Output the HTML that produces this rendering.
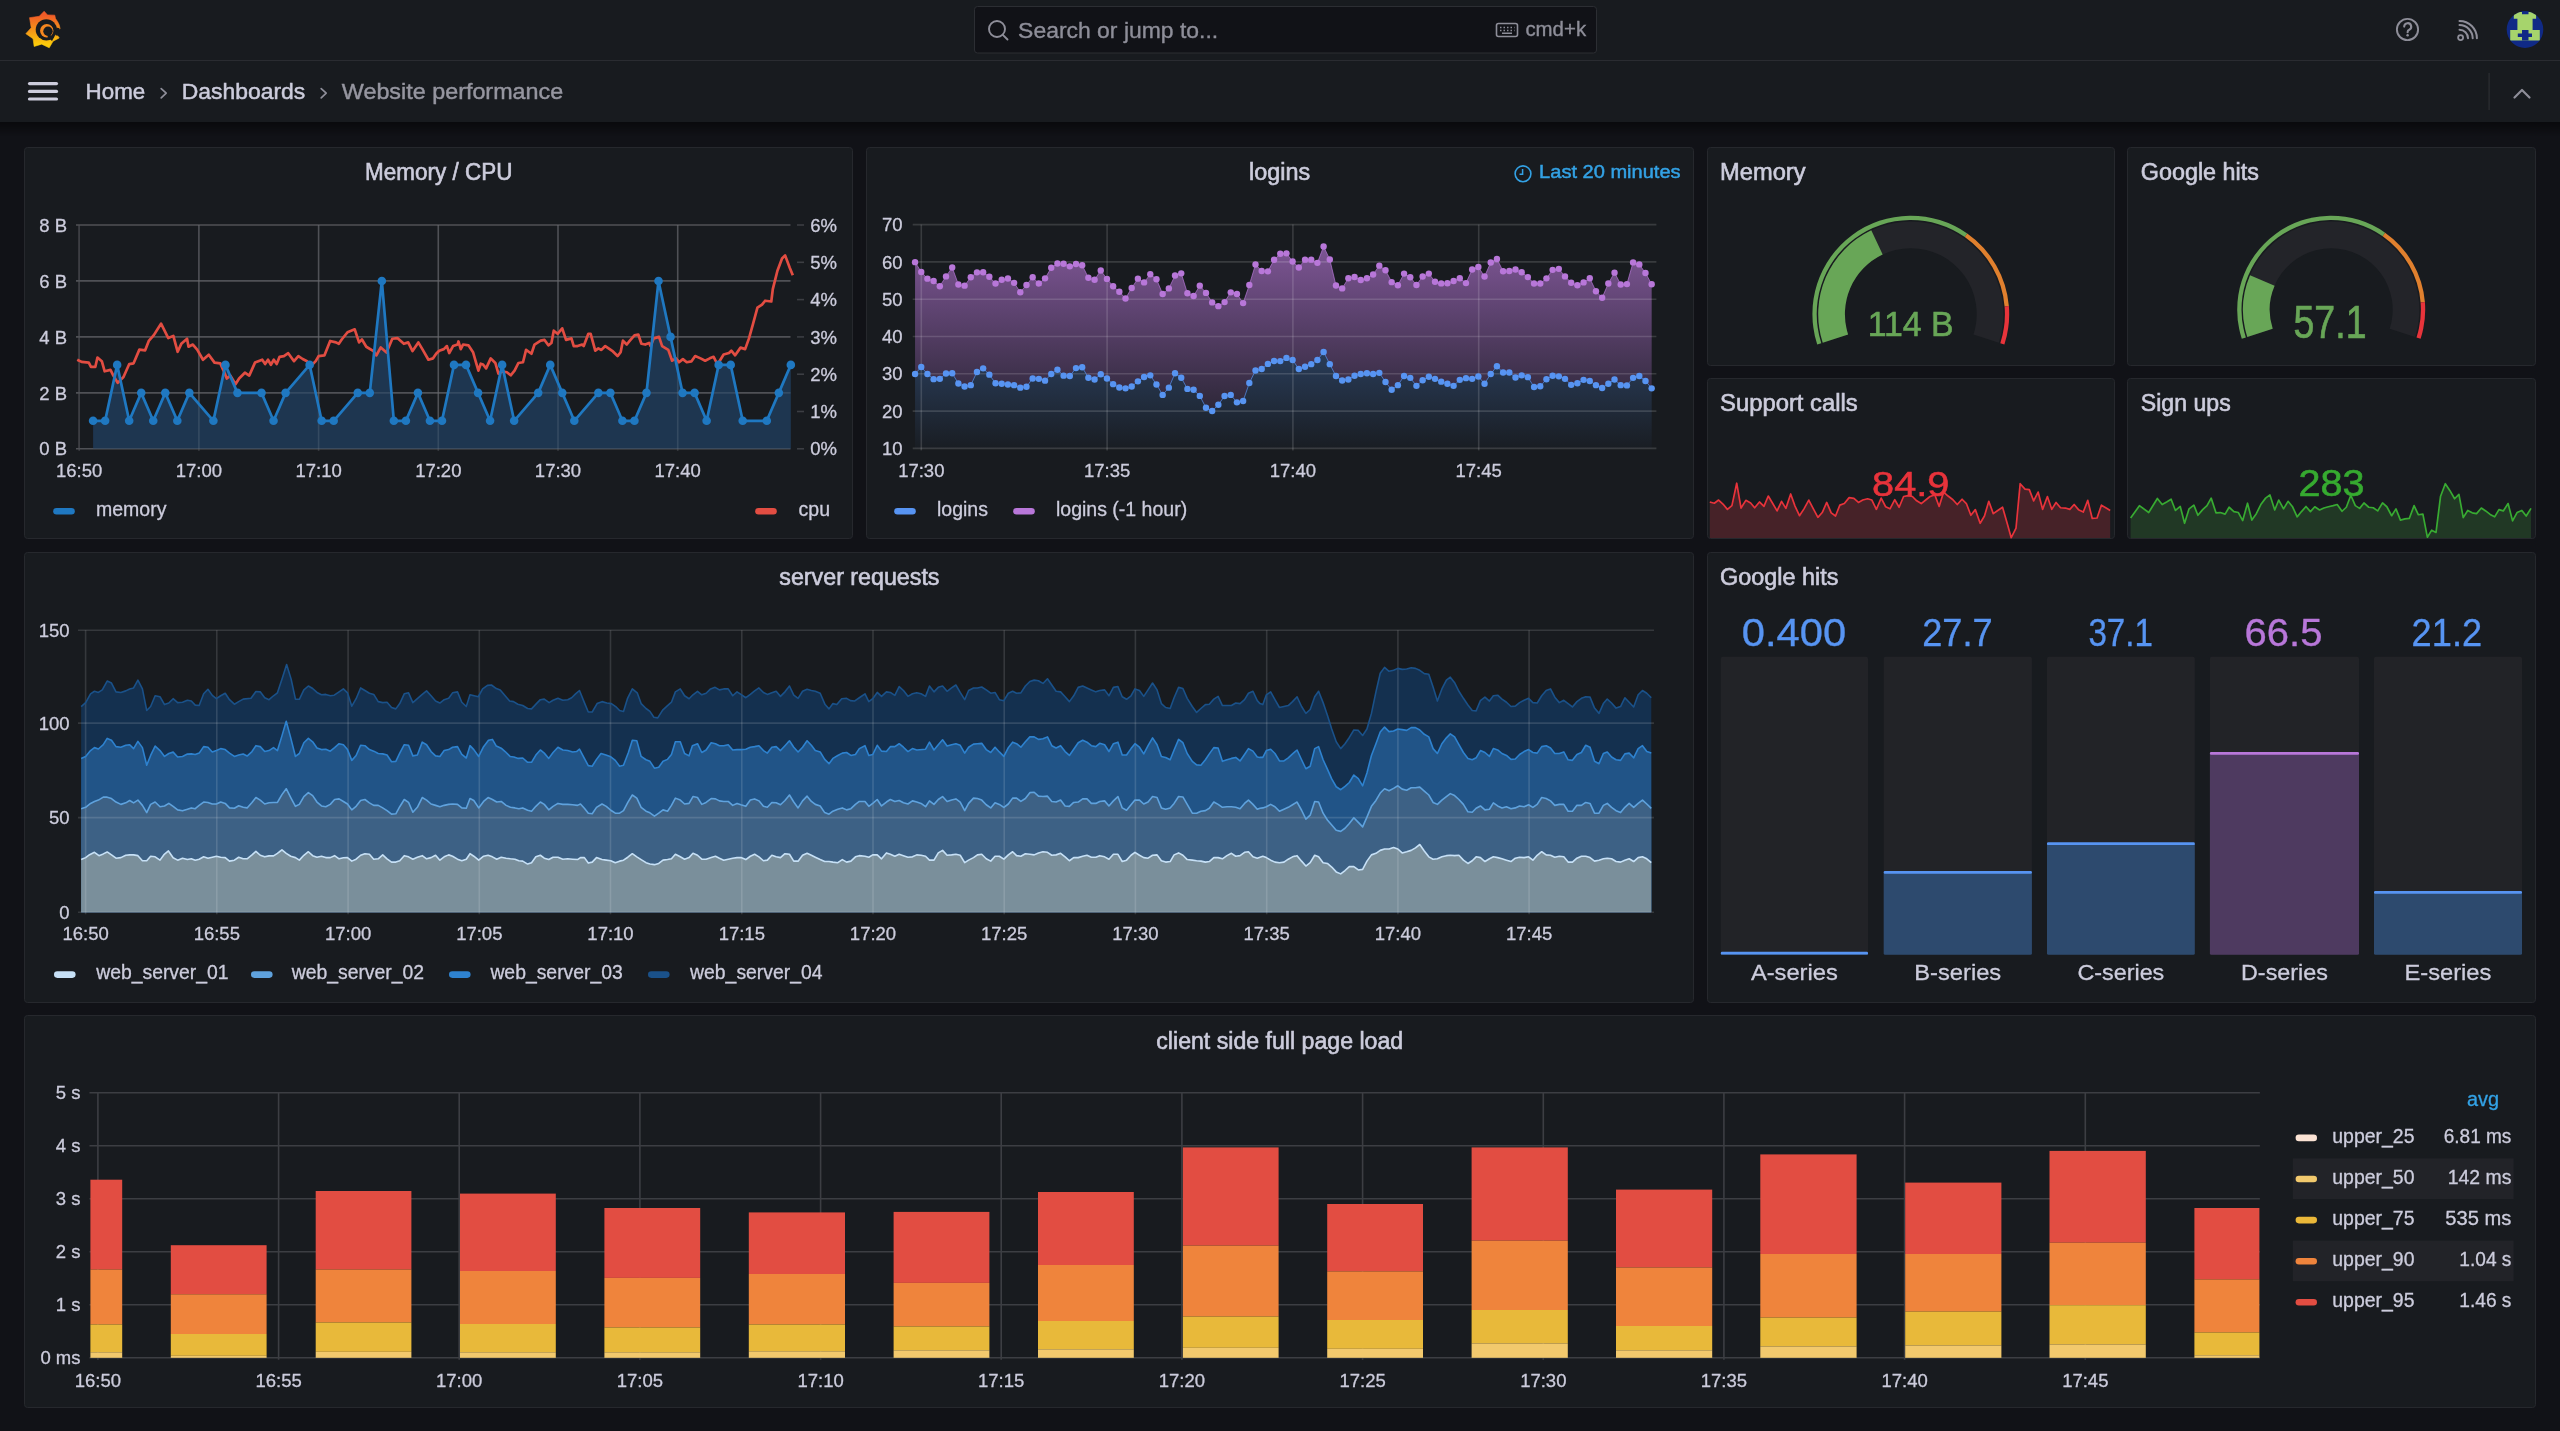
<!DOCTYPE html><html><head><meta charset="utf-8"><style>
*{box-sizing:border-box;margin:0;padding:0}
html,body{width:2560px;height:1431px;overflow:hidden;background:#111217;font-family:"Liberation Sans",sans-serif;color:#ccccdc}
.abs{position:absolute}
.panel{position:absolute;background:#181b1f;border:1px solid #25272c;border-radius:3px}
.t{position:absolute;white-space:nowrap;line-height:1}
svg{position:absolute;left:0;top:0;overflow:visible}
</style></head><body>
<svg width="2560" height="1431" viewBox="0 0 2560 1431" style="font-family:'Liberation Sans',sans-serif;will-change:transform">
<defs><linearGradient id="logo" x1="0" y1="0" x2="0" y2="1"><stop offset="0.1" stop-color="#f05a28"/><stop offset="0.9" stop-color="#fbca0a"/></linearGradient><linearGradient id="shad" x1="0" y1="0" x2="0" y2="1"><stop offset="0" stop-color="#000" stop-opacity="0.45"/><stop offset="1" stop-color="#000" stop-opacity="0"/></linearGradient></defs>
<rect x="0" y="0" width="2560" height="122" fill="#181b1f"/>
<rect x="0" y="60" width="2560" height="1" fill="#2a2c31"/>
<rect x="0" y="122" width="2560" height="14" fill="url(#shad)"/>
<polygon points="44.14,11.23 47.52,14.92 54.75,15.13 55.52,18.61 57.67,21.68 59.27,25.07 60.13,28.76 56.44,29.22 55.83,32.29 57.06,34.75 59.21,37.98 53.06,41.21 49.21,47.82 41.68,44.13 34.15,46.44 33.07,38.75 25.84,33.68 31.23,27.68 29.53,17.69 39.22,16.30" fill="url(#logo)" stroke="url(#logo)" stroke-width="0.6" stroke-linejoin="round"/>
<circle cx="46.3" cy="29.8" r="10.6" fill="#181b1f"/>
<path d="M56.2 27.5 L59.5 28.2 L57.5 36 L55.5 35 Z" fill="#181b1f"/>
<circle cx="46.75" cy="30.75" r="6.7" fill="#f5861f"/>
<circle cx="48" cy="31.3" r="4.7" fill="#181b1f"/>
<path d="M48.5 34.5 L54.5 36.5 L52 41 L47.5 37 Z" fill="#181b1f"/>
<rect x="974.5" y="6.5" width="622" height="46.5" rx="3" fill="#111217" stroke="#2c2e33" stroke-width="1"/>
<circle cx="997" cy="29" r="8" fill="none" stroke="#8e8e99" stroke-width="1.9"/>
<line x1="1002.8" y1="34.8" x2="1007.5" y2="39.5" stroke="#8e8e99" stroke-width="1.9" stroke-linecap="round"/>
<text x="1018.1" y="37.5" font-size="22" fill="#8e8e99" stroke="#8e8e99" stroke-width="0.35" textLength="200.1" lengthAdjust="spacingAndGlyphs">Search or jump to...</text>
<rect x="1496.5" y="23.5" width="21" height="13" rx="2" fill="none" stroke="#8e8e99" stroke-width="1.6"/>
<path d="M1500 27.5h1.5M1503.5 27.5h1.5M1507 27.5h1.5M1510.5 27.5h1.5M1514 27.5h0.5M1500 30.5h1.5M1503.5 30.5h1.5M1507 30.5h1.5M1510.5 30.5h1.5M1514 30.5h0.5M1502 33.2h10" stroke="#8e8e99" stroke-width="1.4"/>
<text x="1525.4" y="35.8" font-size="19.5" fill="#8e8e99" stroke="#8e8e99" stroke-width="0.35" textLength="60.7" lengthAdjust="spacingAndGlyphs">cmd+k</text>
<circle cx="2407.5" cy="29.5" r="10.6" fill="none" stroke="#8e8e99" stroke-width="1.9"/>
<path d="M2404.2 26.6 a3.5 3.5 0 1 1 5 3.2 q-1.6 0.7 -1.6 2.5" fill="none" stroke="#8e8e99" stroke-width="2.1" stroke-linecap="round"/>
<circle cx="2407.6" cy="35.3" r="1.25" fill="#8e8e99"/>
<circle cx="2460.6" cy="37.6" r="2.5" fill="none" stroke="#8e8e99" stroke-width="1.8"/>
<path d="M2459.5 29.8 a8.5 8.5 0 0 1 8.5 8.5 M2459.5 25.1 a13.2 13.2 0 0 1 13.2 13.2 M2459.5 20.9 a17.4 17.4 0 0 1 17.4 17.4" fill="none" stroke="#8e8e99" stroke-width="2" stroke-linecap="round"/>
<clipPath id="av"><circle cx="2525" cy="29.6" r="18.3"/></clipPath>
<g clip-path="url(#av)"><rect x="2505" y="10" width="40" height="40" fill="#102a86"/><path fill="#a6d46c" d="M2513.8 12h22.3v6.8h-3.5V30h7.2v10.6h-29.6V30h7.2V18.8h-3.6z"/><path fill="#102a86" d="M2522 10h6.5v4.2h-6.5zM2517.8 33.5h14.2V37h-14.2zM2522 30h6.5v10.6h-6.5z"/></g>
<line x1="29.5" y1="83.6" x2="56.5" y2="83.6" stroke="#ccccdc" stroke-width="3.2" stroke-linecap="round"/>
<line x1="29.5" y1="91.4" x2="56.5" y2="91.4" stroke="#ccccdc" stroke-width="3.2" stroke-linecap="round"/>
<line x1="29.5" y1="99.0" x2="56.5" y2="99.0" stroke="#ccccdc" stroke-width="3.2" stroke-linecap="round"/>
<text x="85.6" y="98.9" font-size="22.8" fill="#ccccdc" stroke="#ccccdc" stroke-width="0.5" textLength="59.6" lengthAdjust="spacingAndGlyphs">Home</text>
<path d="M161.2 88.6 L166.2 93.2 L161.2 97.8" fill="none" stroke="#8e8e99" stroke-width="1.7" stroke-linecap="round" stroke-linejoin="round"/>
<text x="181.8" y="98.9" font-size="22.8" fill="#ccccdc" stroke="#ccccdc" stroke-width="0.5" textLength="123.4" lengthAdjust="spacingAndGlyphs">Dashboards</text>
<path d="M321.2 88.6 L326.2 93.2 L321.2 97.8" fill="none" stroke="#8e8e99" stroke-width="1.7" stroke-linecap="round" stroke-linejoin="round"/>
<text x="341.8" y="98.9" font-size="22.8" fill="#9696a0" stroke="#9696a0" stroke-width="0.45" textLength="221.4" lengthAdjust="spacingAndGlyphs">Website performance</text>
<rect x="2488.5" y="73" width="1.2" height="37" fill="#2c2e33"/>
<path d="M2514.5 97.5 L2522 90 L2529.5 97.5" fill="none" stroke="#8e8e99" stroke-width="2.2" stroke-linecap="round" stroke-linejoin="round"/><rect x="24.5" y="147.5" width="828" height="391" rx="3" fill="#181b1f" stroke="#26282d" stroke-width="1"/>
<rect x="866.5" y="147.5" width="827" height="391" rx="3" fill="#181b1f" stroke="#26282d" stroke-width="1"/>
<rect x="1707.5" y="147.5" width="407" height="218" rx="3" fill="#181b1f" stroke="#26282d" stroke-width="1"/>
<rect x="2127.5" y="147.5" width="408" height="218" rx="3" fill="#181b1f" stroke="#26282d" stroke-width="1"/>
<rect x="1707.5" y="378.5" width="407" height="160" rx="3" fill="#181b1f" stroke="#26282d" stroke-width="1"/>
<rect x="2127.5" y="378.5" width="408" height="160" rx="3" fill="#181b1f" stroke="#26282d" stroke-width="1"/>
<rect x="24.5" y="552.5" width="1669" height="450" rx="3" fill="#181b1f" stroke="#26282d" stroke-width="1"/>
<rect x="1707.5" y="552.5" width="828" height="450" rx="3" fill="#181b1f" stroke="#26282d" stroke-width="1"/>
<rect x="24.5" y="1015.5" width="2511" height="392" rx="3" fill="#181b1f" stroke="#26282d" stroke-width="1"/><line x1="76" y1="448.8" x2="790.5" y2="448.8" stroke="#3c3e43" stroke-width="1.6"/>
<line x1="76" y1="392.9" x2="790.5" y2="392.9" stroke="#3c3e43" stroke-width="1.6"/>
<line x1="76" y1="336.9" x2="790.5" y2="336.9" stroke="#3c3e43" stroke-width="1.6"/>
<line x1="76" y1="280.9" x2="790.5" y2="280.9" stroke="#3c3e43" stroke-width="1.6"/>
<line x1="76" y1="225.0" x2="790.5" y2="225.0" stroke="#3c3e43" stroke-width="1.6"/>
<line x1="79.2" y1="225.0" x2="79.2" y2="450.8" stroke="#3c3e43" stroke-width="1.6"/>
<line x1="198.9" y1="225.0" x2="198.9" y2="450.8" stroke="#3c3e43" stroke-width="1.6"/>
<line x1="318.6" y1="225.0" x2="318.6" y2="450.8" stroke="#3c3e43" stroke-width="1.6"/>
<line x1="438.3" y1="225.0" x2="438.3" y2="450.8" stroke="#3c3e43" stroke-width="1.6"/>
<line x1="558.0" y1="225.0" x2="558.0" y2="450.8" stroke="#3c3e43" stroke-width="1.6"/>
<line x1="677.7" y1="225.0" x2="677.7" y2="450.8" stroke="#3c3e43" stroke-width="1.6"/>
<line x1="797" y1="448.8" x2="804" y2="448.8" stroke="#3c3e43" stroke-width="1.6"/>
<text x="837.0" y="455.4" font-size="18.5" fill="#ccccdc" text-anchor="end" font-weight="normal" stroke="#ccccdc" stroke-width="0.3" >0%</text>
<line x1="797" y1="411.5" x2="804" y2="411.5" stroke="#3c3e43" stroke-width="1.6"/>
<text x="837.0" y="418.1" font-size="18.5" fill="#ccccdc" text-anchor="end" font-weight="normal" stroke="#ccccdc" stroke-width="0.3" >1%</text>
<line x1="797" y1="374.2" x2="804" y2="374.2" stroke="#3c3e43" stroke-width="1.6"/>
<text x="837.0" y="380.8" font-size="18.5" fill="#ccccdc" text-anchor="end" font-weight="normal" stroke="#ccccdc" stroke-width="0.3" >2%</text>
<line x1="797" y1="336.9" x2="804" y2="336.9" stroke="#3c3e43" stroke-width="1.6"/>
<text x="837.0" y="343.5" font-size="18.5" fill="#ccccdc" text-anchor="end" font-weight="normal" stroke="#ccccdc" stroke-width="0.3" >3%</text>
<line x1="797" y1="299.6" x2="804" y2="299.6" stroke="#3c3e43" stroke-width="1.6"/>
<text x="837.0" y="306.2" font-size="18.5" fill="#ccccdc" text-anchor="end" font-weight="normal" stroke="#ccccdc" stroke-width="0.3" >4%</text>
<line x1="797" y1="262.3" x2="804" y2="262.3" stroke="#3c3e43" stroke-width="1.6"/>
<text x="837.0" y="268.9" font-size="18.5" fill="#ccccdc" text-anchor="end" font-weight="normal" stroke="#ccccdc" stroke-width="0.3" >5%</text>
<line x1="797" y1="225.0" x2="804" y2="225.0" stroke="#3c3e43" stroke-width="1.6"/>
<text x="837.0" y="231.6" font-size="18.5" fill="#ccccdc" text-anchor="end" font-weight="normal" stroke="#ccccdc" stroke-width="0.3" >6%</text>
<text x="67.0" y="455.4" font-size="18.5" fill="#ccccdc" text-anchor="end" font-weight="normal" stroke="#ccccdc" stroke-width="0.3" >0 B</text>
<text x="67.0" y="399.5" font-size="18.5" fill="#ccccdc" text-anchor="end" font-weight="normal" stroke="#ccccdc" stroke-width="0.3" >2 B</text>
<text x="67.0" y="343.5" font-size="18.5" fill="#ccccdc" text-anchor="end" font-weight="normal" stroke="#ccccdc" stroke-width="0.3" >4 B</text>
<text x="67.0" y="287.6" font-size="18.5" fill="#ccccdc" text-anchor="end" font-weight="normal" stroke="#ccccdc" stroke-width="0.3" >6 B</text>
<text x="67.0" y="231.6" font-size="18.5" fill="#ccccdc" text-anchor="end" font-weight="normal" stroke="#ccccdc" stroke-width="0.3" >8 B</text>
<text x="79.2" y="477.0" font-size="18.5" fill="#ccccdc" text-anchor="middle" font-weight="normal" stroke="#ccccdc" stroke-width="0.3" >16:50</text>
<text x="198.9" y="477.0" font-size="18.5" fill="#ccccdc" text-anchor="middle" font-weight="normal" stroke="#ccccdc" stroke-width="0.3" >17:00</text>
<text x="318.6" y="477.0" font-size="18.5" fill="#ccccdc" text-anchor="middle" font-weight="normal" stroke="#ccccdc" stroke-width="0.3" >17:10</text>
<text x="438.3" y="477.0" font-size="18.5" fill="#ccccdc" text-anchor="middle" font-weight="normal" stroke="#ccccdc" stroke-width="0.3" >17:20</text>
<text x="558.0" y="477.0" font-size="18.5" fill="#ccccdc" text-anchor="middle" font-weight="normal" stroke="#ccccdc" stroke-width="0.3" >17:30</text>
<text x="677.7" y="477.0" font-size="18.5" fill="#ccccdc" text-anchor="middle" font-weight="normal" stroke="#ccccdc" stroke-width="0.3" >17:40</text>
<path d="M93.10,420.82 L105.13,420.82 L117.16,364.88 L129.19,420.82 L141.22,392.85 L153.25,420.82 L165.28,392.85 L177.31,420.82 L189.34,392.85 L213.40,420.82 L225.43,364.88 L237.46,392.85 L261.52,392.85 L273.55,420.82 L285.58,392.85 L309.64,364.88 L321.67,420.82 L333.70,420.82 L357.76,392.85 L369.79,392.85 L381.82,280.95 L393.85,420.82 L405.88,420.82 L417.91,392.85 L429.94,420.82 L441.97,420.82 L454.00,364.88 L466.03,364.88 L478.06,392.85 L490.09,420.82 L502.12,364.88 L514.15,420.82 L538.21,392.85 L550.24,364.88 L562.27,392.85 L574.30,420.82 L598.36,392.85 L610.39,392.85 L622.42,420.82 L634.45,420.82 L646.48,392.85 L658.51,280.95 L670.54,336.90 L682.57,392.85 L694.60,392.85 L706.63,420.82 L718.66,364.88 L730.69,364.88 L742.72,420.82 L766.78,420.82 L778.81,392.85 L790.84,364.88 L790.84,448.8 L93.10,448.8 Z" fill="#1e3650"/>
<line x1="79.2" y1="225.0" x2="79.2" y2="448.8" stroke="#3c3e43" stroke-width="1.6"/>
<line x1="198.9" y1="225.0" x2="198.9" y2="448.8" stroke="#ffffff" stroke-opacity="0.1" stroke-width="1.6"/>
<line x1="318.6" y1="225.0" x2="318.6" y2="448.8" stroke="#ffffff" stroke-opacity="0.1" stroke-width="1.6"/>
<line x1="438.3" y1="225.0" x2="438.3" y2="448.8" stroke="#ffffff" stroke-opacity="0.1" stroke-width="1.6"/>
<line x1="558.0" y1="225.0" x2="558.0" y2="448.8" stroke="#ffffff" stroke-opacity="0.1" stroke-width="1.6"/>
<line x1="677.7" y1="225.0" x2="677.7" y2="448.8" stroke="#ffffff" stroke-opacity="0.1" stroke-width="1.6"/>
<line x1="76" y1="448.8" x2="790.5" y2="448.8" stroke="#ffffff" stroke-opacity="0.1" stroke-width="1.6"/>
<line x1="76" y1="392.9" x2="790.5" y2="392.9" stroke="#ffffff" stroke-opacity="0.1" stroke-width="1.6"/>
<line x1="76" y1="336.9" x2="790.5" y2="336.9" stroke="#ffffff" stroke-opacity="0.1" stroke-width="1.6"/>
<line x1="76" y1="280.9" x2="790.5" y2="280.9" stroke="#ffffff" stroke-opacity="0.1" stroke-width="1.6"/>
<line x1="76" y1="225.0" x2="790.5" y2="225.0" stroke="#ffffff" stroke-opacity="0.1" stroke-width="1.6"/>
<path d="M77.23,359.73 L81.56,361.89 L88.79,362.62 L90.96,366.95 L95.29,366.95 L97.46,357.56 L101.80,361.17 L104.69,371.29 L110.47,369.84 L113.36,375.62 L117.69,382.85 L123.48,377.07 L129.26,364.06 L133.59,363.34 L139.37,349.61 L145.16,350.33 L148.77,340.94 L153.83,335.16 L161.05,323.59 L168.28,338.05 L173.34,335.88 L177.67,351.78 L181.29,343.83 L187.07,338.77 L188.51,346.72 L192.85,344.55 L197.19,349.61 L202.97,359.73 L208.75,354.67 L214.53,362.62 L220.31,363.34 L223.20,369.84 L226.81,378.51 L230.43,375.62 L235.49,384.30 L239.10,378.51 L244.88,372.73 L249.22,375.62 L255.00,362.62 L262.22,359.73 L265.11,364.06 L268.01,359.73 L270.90,364.78 L273.79,359.73 L276.68,364.06 L279.57,356.83 L283.90,356.11 L288.24,353.22 L294.02,361.17 L298.36,356.11 L302.69,359.00 L307.03,361.17 L310.64,366.23 L315.70,361.17 L318.59,356.11 L324.37,355.39 L330.15,340.94 L335.93,342.38 L338.82,343.83 L341.72,339.49 L347.50,332.26 L354.72,329.37 L359.06,342.38 L361.95,339.49 L366.29,346.72 L373.51,351.05 L376.40,355.39 L380.74,347.44 L386.52,352.50 L392.30,338.77 L397.36,338.05 L403.86,343.83 L408.20,342.38 L412.54,351.05 L418.32,342.38 L422.65,349.61 L428.43,359.73 L433.07,358.37 L436.15,353.76 L439.22,350.68 L443.84,349.15 L446.91,346.07 L449.22,352.99 L453.06,346.07 L457.67,344.53 L458.44,341.46 L460.75,349.15 L463.05,344.53 L468.43,345.30 L473.04,352.22 L476.12,362.98 L478.42,370.67 L480.73,363.75 L483.04,364.52 L486.11,368.36 L490.72,358.37 L495.33,362.98 L498.41,373.74 L502.25,371.44 L506.86,372.21 L510.71,375.28 L514.55,370.67 L518.39,362.98 L523.01,362.21 L526.08,349.92 L531.46,353.76 L534.53,344.53 L540.68,340.69 L544.53,339.92 L548.37,345.30 L551.45,343.00 L553.75,330.70 L557.59,333.77 L562.21,328.39 L566.05,339.92 L571.43,338.39 L573.74,346.07 L577.58,346.07 L582.19,344.53 L583.73,346.07 L588.34,333.77 L590.65,333.77 L595.26,350.68 L598.33,348.38 L601.41,349.92 L605.25,346.07 L612.94,351.45 L617.55,356.06 L620.62,352.22 L622.93,340.69 L626.77,344.53 L629.85,340.69 L634.46,335.31 L638.30,334.54 L641.38,343.77 L645.22,344.53 L649.06,343.00 L650.60,346.07 L653.67,338.39 L659.05,336.85 L662.13,346.07 L668.28,349.92 L672.12,360.68 L675.96,358.37 L679.04,362.21 L682.88,359.14 L686.73,362.21 L691.34,361.45 L695.18,356.06 L700.56,358.37 L705.17,360.68 L709.78,358.37 L713.63,356.83 L717.47,364.52 L723.62,354.53 L729.00,352.99 L731.31,350.68 L735.15,355.30 L740.53,347.61 L745.14,349.15 L748.99,338.39 L752.83,324.55 L757.44,307.64 L762.05,304.57 L765.13,300.72 L771.28,301.49 L772.81,289.19 L777.43,270.75 L782.04,258.45 L785.11,255.37 L789.72,267.67 L792.80,275.36" fill="none" stroke="#e24d42" stroke-width="2.7" stroke-linejoin="round"/>
<path d="M93.10,420.82 L105.13,420.82 L117.16,364.88 L129.19,420.82 L141.22,392.85 L153.25,420.82 L165.28,392.85 L177.31,420.82 L189.34,392.85 L213.40,420.82 L225.43,364.88 L237.46,392.85 L261.52,392.85 L273.55,420.82 L285.58,392.85 L309.64,364.88 L321.67,420.82 L333.70,420.82 L357.76,392.85 L369.79,392.85 L381.82,280.95 L393.85,420.82 L405.88,420.82 L417.91,392.85 L429.94,420.82 L441.97,420.82 L454.00,364.88 L466.03,364.88 L478.06,392.85 L490.09,420.82 L502.12,364.88 L514.15,420.82 L538.21,392.85 L550.24,364.88 L562.27,392.85 L574.30,420.82 L598.36,392.85 L610.39,392.85 L622.42,420.82 L634.45,420.82 L646.48,392.85 L658.51,280.95 L670.54,336.90 L682.57,392.85 L694.60,392.85 L706.63,420.82 L718.66,364.88 L730.69,364.88 L742.72,420.82 L766.78,420.82 L778.81,392.85 L790.84,364.88" fill="none" stroke="#1f78c1" stroke-width="2.7" stroke-linejoin="round"/>
<circle cx="93.10" cy="420.82" r="4.3" fill="#1f78c1"/>
<circle cx="105.13" cy="420.82" r="4.3" fill="#1f78c1"/>
<circle cx="117.16" cy="364.88" r="4.3" fill="#1f78c1"/>
<circle cx="129.19" cy="420.82" r="4.3" fill="#1f78c1"/>
<circle cx="141.22" cy="392.85" r="4.3" fill="#1f78c1"/>
<circle cx="153.25" cy="420.82" r="4.3" fill="#1f78c1"/>
<circle cx="165.28" cy="392.85" r="4.3" fill="#1f78c1"/>
<circle cx="177.31" cy="420.82" r="4.3" fill="#1f78c1"/>
<circle cx="189.34" cy="392.85" r="4.3" fill="#1f78c1"/>
<circle cx="213.40" cy="420.82" r="4.3" fill="#1f78c1"/>
<circle cx="225.43" cy="364.88" r="4.3" fill="#1f78c1"/>
<circle cx="237.46" cy="392.85" r="4.3" fill="#1f78c1"/>
<circle cx="261.52" cy="392.85" r="4.3" fill="#1f78c1"/>
<circle cx="273.55" cy="420.82" r="4.3" fill="#1f78c1"/>
<circle cx="285.58" cy="392.85" r="4.3" fill="#1f78c1"/>
<circle cx="309.64" cy="364.88" r="4.3" fill="#1f78c1"/>
<circle cx="321.67" cy="420.82" r="4.3" fill="#1f78c1"/>
<circle cx="333.70" cy="420.82" r="4.3" fill="#1f78c1"/>
<circle cx="357.76" cy="392.85" r="4.3" fill="#1f78c1"/>
<circle cx="369.79" cy="392.85" r="4.3" fill="#1f78c1"/>
<circle cx="381.82" cy="280.95" r="4.3" fill="#1f78c1"/>
<circle cx="393.85" cy="420.82" r="4.3" fill="#1f78c1"/>
<circle cx="405.88" cy="420.82" r="4.3" fill="#1f78c1"/>
<circle cx="417.91" cy="392.85" r="4.3" fill="#1f78c1"/>
<circle cx="429.94" cy="420.82" r="4.3" fill="#1f78c1"/>
<circle cx="441.97" cy="420.82" r="4.3" fill="#1f78c1"/>
<circle cx="454.00" cy="364.88" r="4.3" fill="#1f78c1"/>
<circle cx="466.03" cy="364.88" r="4.3" fill="#1f78c1"/>
<circle cx="478.06" cy="392.85" r="4.3" fill="#1f78c1"/>
<circle cx="490.09" cy="420.82" r="4.3" fill="#1f78c1"/>
<circle cx="502.12" cy="364.88" r="4.3" fill="#1f78c1"/>
<circle cx="514.15" cy="420.82" r="4.3" fill="#1f78c1"/>
<circle cx="538.21" cy="392.85" r="4.3" fill="#1f78c1"/>
<circle cx="550.24" cy="364.88" r="4.3" fill="#1f78c1"/>
<circle cx="562.27" cy="392.85" r="4.3" fill="#1f78c1"/>
<circle cx="574.30" cy="420.82" r="4.3" fill="#1f78c1"/>
<circle cx="598.36" cy="392.85" r="4.3" fill="#1f78c1"/>
<circle cx="610.39" cy="392.85" r="4.3" fill="#1f78c1"/>
<circle cx="622.42" cy="420.82" r="4.3" fill="#1f78c1"/>
<circle cx="634.45" cy="420.82" r="4.3" fill="#1f78c1"/>
<circle cx="646.48" cy="392.85" r="4.3" fill="#1f78c1"/>
<circle cx="658.51" cy="280.95" r="4.3" fill="#1f78c1"/>
<circle cx="670.54" cy="336.90" r="4.3" fill="#1f78c1"/>
<circle cx="682.57" cy="392.85" r="4.3" fill="#1f78c1"/>
<circle cx="694.60" cy="392.85" r="4.3" fill="#1f78c1"/>
<circle cx="706.63" cy="420.82" r="4.3" fill="#1f78c1"/>
<circle cx="718.66" cy="364.88" r="4.3" fill="#1f78c1"/>
<circle cx="730.69" cy="364.88" r="4.3" fill="#1f78c1"/>
<circle cx="742.72" cy="420.82" r="4.3" fill="#1f78c1"/>
<circle cx="766.78" cy="420.82" r="4.3" fill="#1f78c1"/>
<circle cx="778.81" cy="392.85" r="4.3" fill="#1f78c1"/>
<circle cx="790.84" cy="364.88" r="4.3" fill="#1f78c1"/>
<line x1="56.5" y1="511.2" x2="71.5" y2="511.2" stroke="#1f78c1" stroke-width="6.6" stroke-linecap="round"/>
<text x="96.0" y="515.7" font-size="19.5" fill="#ccccdc" text-anchor="start" font-weight="normal" stroke="#ccccdc" stroke-width="0.3" >memory</text>
<line x1="758.5" y1="511.2" x2="773.5" y2="511.2" stroke="#e24d42" stroke-width="6.6" stroke-linecap="round"/>
<text x="830.0" y="515.7" font-size="19.5" fill="#ccccdc" text-anchor="end" font-weight="normal" stroke="#ccccdc" stroke-width="0.3" >cpu</text>
<text x="365.1" y="180.0" font-size="23" fill="#ccccdc" font-weight="normal" stroke="#ccccdc" stroke-width="0.6" textLength="147.3" lengthAdjust="spacingAndGlyphs" >Memory / CPU</text>
<defs><linearGradient id="gp" gradientUnits="userSpaceOnUse" x1="0" y1="224.6" x2="0" y2="448.4"><stop offset="0" stop-color="#b877d9" stop-opacity="0.7"/><stop offset="1" stop-color="#b877d9" stop-opacity="0.02"/></linearGradient><linearGradient id="gb" gradientUnits="userSpaceOnUse" x1="0" y1="224.6" x2="0" y2="448.4"><stop offset="0" stop-color="#5794f2" stop-opacity="0.62"/><stop offset="1" stop-color="#5794f2" stop-opacity="0.02"/></linearGradient></defs>
<path d="M915.06,262.15 L921.25,271.93 L927.44,278.64 L933.63,281.01 L939.82,286.18 L946.01,276.40 L952.20,267.46 L958.39,284.51 L964.58,285.63 L970.77,277.24 L976.96,272.35 L983.15,272.21 L989.34,276.82 L995.53,283.53 L1001.72,279.76 L1007.91,278.50 L1014.10,282.83 L1020.29,292.19 L1026.48,284.93 L1032.67,277.24 L1038.86,283.53 L1045.05,278.36 L1051.24,267.74 L1057.43,263.54 L1063.62,263.82 L1069.81,266.34 L1076.00,263.96 L1082.19,265.22 L1088.38,277.80 L1094.57,279.76 L1100.76,270.53 L1106.95,278.92 L1113.14,286.32 L1119.33,291.77 L1125.52,298.48 L1131.71,288.00 L1137.90,278.64 L1144.09,282.41 L1150.28,274.30 L1156.47,279.20 L1162.66,294.01 L1168.85,288.42 L1175.04,275.56 L1181.23,273.33 L1187.42,293.31 L1193.61,295.97 L1199.80,285.63 L1205.99,292.89 L1212.18,302.40 L1218.37,306.17 L1224.56,302.12 L1230.75,292.33 L1236.94,294.01 L1243.13,303.10 L1249.32,284.93 L1255.51,264.52 L1261.70,270.95 L1267.89,271.37 L1274.08,259.77 L1280.27,253.76 L1286.46,253.34 L1292.65,261.45 L1298.84,267.46 L1305.03,259.63 L1311.22,259.63 L1317.41,262.84 L1323.60,246.49 L1329.79,259.49 L1335.98,285.49 L1342.17,288.42 L1348.36,278.22 L1354.55,276.96 L1360.74,280.03 L1366.93,278.22 L1373.12,274.44 L1379.31,265.64 L1385.50,270.25 L1391.69,282.13 L1397.88,285.21 L1404.07,273.61 L1410.26,277.24 L1416.45,284.93 L1422.64,276.54 L1428.83,273.61 L1435.02,281.71 L1441.21,283.39 L1447.40,283.25 L1453.59,281.01 L1459.78,278.22 L1465.97,283.11 L1472.16,269.55 L1478.35,267.04 L1484.54,276.54 L1490.73,262.56 L1496.92,258.93 L1503.11,271.23 L1509.30,270.95 L1515.49,269.55 L1521.68,272.21 L1527.87,277.10 L1534.06,283.53 L1540.25,283.53 L1546.44,278.36 L1552.63,269.83 L1558.82,268.85 L1565.01,276.40 L1571.20,282.69 L1577.39,285.21 L1583.58,282.41 L1589.77,278.22 L1595.96,291.22 L1602.15,297.78 L1608.34,283.53 L1614.53,272.63 L1620.72,284.51 L1626.91,284.09 L1633.10,262.42 L1639.29,264.38 L1645.48,273.05 L1651.67,284.23 L1651.67,388.35 L1645.48,380.94 L1639.29,376.05 L1633.10,377.87 L1626.91,385.42 L1620.72,385.14 L1614.53,379.55 L1608.34,383.74 L1602.15,387.93 L1595.96,385.14 L1589.77,380.94 L1583.58,379.83 L1577.39,383.32 L1571.20,384.86 L1565.01,378.85 L1558.82,376.33 L1552.63,375.77 L1546.44,379.27 L1540.25,386.25 L1534.06,386.95 L1527.87,377.17 L1521.68,375.35 L1515.49,377.45 L1509.30,372.56 L1503.11,372.56 L1496.92,366.27 L1490.73,373.96 L1484.54,383.74 L1478.35,376.47 L1472.16,378.85 L1465.97,378.15 L1459.78,379.83 L1453.59,385.84 L1447.40,383.74 L1441.21,381.64 L1435.02,378.85 L1428.83,376.75 L1422.64,380.24 L1416.45,385.84 L1410.26,377.87 L1404.07,376.05 L1397.88,385.14 L1391.69,389.75 L1385.50,382.06 L1379.31,372.84 L1373.12,373.96 L1366.93,373.26 L1360.74,373.96 L1354.55,375.77 L1348.36,379.55 L1342.17,380.52 L1335.98,376.05 L1329.79,364.17 L1323.60,352.01 L1317.41,359.98 L1311.22,364.17 L1305.03,366.69 L1298.84,369.06 L1292.65,359.98 L1286.46,357.88 L1280.27,361.10 L1274.08,360.96 L1267.89,363.89 L1261.70,369.06 L1255.51,370.46 L1249.32,383.04 L1243.13,400.93 L1236.94,402.33 L1230.75,394.92 L1224.56,396.04 L1218.37,404.70 L1212.18,410.99 L1205.99,407.78 L1199.80,395.90 L1193.61,389.75 L1187.42,388.91 L1181.23,377.73 L1175.04,373.26 L1168.85,387.65 L1162.66,394.92 L1156.47,384.44 L1150.28,375.35 L1144.09,377.03 L1137.90,381.36 L1131.71,386.53 L1125.52,388.35 L1119.33,387.51 L1113.14,384.16 L1106.95,378.57 L1100.76,374.23 L1094.57,379.55 L1088.38,377.73 L1082.19,367.25 L1076.00,368.09 L1069.81,376.05 L1063.62,375.63 L1057.43,369.76 L1051.24,373.96 L1045.05,380.66 L1038.86,378.85 L1032.67,378.43 L1026.48,386.81 L1020.29,387.65 L1014.10,385.14 L1007.91,384.44 L1001.72,383.74 L995.53,383.32 L989.34,374.65 L983.15,368.36 L976.96,372.00 L970.77,385.14 L964.58,386.53 L958.39,383.46 L952.20,373.26 L946.01,373.54 L939.82,378.85 L933.63,379.13 L927.44,373.96 L921.25,366.97 L915.06,373.96 Z" fill="url(#gp)"/>
<path d="M915.06,373.96 L921.25,366.97 L927.44,373.96 L933.63,379.13 L939.82,378.85 L946.01,373.54 L952.20,373.26 L958.39,383.46 L964.58,386.53 L970.77,385.14 L976.96,372.00 L983.15,368.36 L989.34,374.65 L995.53,383.32 L1001.72,383.74 L1007.91,384.44 L1014.10,385.14 L1020.29,387.65 L1026.48,386.81 L1032.67,378.43 L1038.86,378.85 L1045.05,380.66 L1051.24,373.96 L1057.43,369.76 L1063.62,375.63 L1069.81,376.05 L1076.00,368.09 L1082.19,367.25 L1088.38,377.73 L1094.57,379.55 L1100.76,374.23 L1106.95,378.57 L1113.14,384.16 L1119.33,387.51 L1125.52,388.35 L1131.71,386.53 L1137.90,381.36 L1144.09,377.03 L1150.28,375.35 L1156.47,384.44 L1162.66,394.92 L1168.85,387.65 L1175.04,373.26 L1181.23,377.73 L1187.42,388.91 L1193.61,389.75 L1199.80,395.90 L1205.99,407.78 L1212.18,410.99 L1218.37,404.70 L1224.56,396.04 L1230.75,394.92 L1236.94,402.33 L1243.13,400.93 L1249.32,383.04 L1255.51,370.46 L1261.70,369.06 L1267.89,363.89 L1274.08,360.96 L1280.27,361.10 L1286.46,357.88 L1292.65,359.98 L1298.84,369.06 L1305.03,366.69 L1311.22,364.17 L1317.41,359.98 L1323.60,352.01 L1329.79,364.17 L1335.98,376.05 L1342.17,380.52 L1348.36,379.55 L1354.55,375.77 L1360.74,373.96 L1366.93,373.26 L1373.12,373.96 L1379.31,372.84 L1385.50,382.06 L1391.69,389.75 L1397.88,385.14 L1404.07,376.05 L1410.26,377.87 L1416.45,385.84 L1422.64,380.24 L1428.83,376.75 L1435.02,378.85 L1441.21,381.64 L1447.40,383.74 L1453.59,385.84 L1459.78,379.83 L1465.97,378.15 L1472.16,378.85 L1478.35,376.47 L1484.54,383.74 L1490.73,373.96 L1496.92,366.27 L1503.11,372.56 L1509.30,372.56 L1515.49,377.45 L1521.68,375.35 L1527.87,377.17 L1534.06,386.95 L1540.25,386.25 L1546.44,379.27 L1552.63,375.77 L1558.82,376.33 L1565.01,378.85 L1571.20,384.86 L1577.39,383.32 L1583.58,379.83 L1589.77,380.94 L1595.96,385.14 L1602.15,387.93 L1608.34,383.74 L1614.53,379.55 L1620.72,385.14 L1626.91,385.42 L1633.10,377.87 L1639.29,376.05 L1645.48,380.94 L1651.67,388.35 L1651.67,448.4 L915.06,448.4 Z" fill="url(#gb)"/>
<line x1="912.7" y1="448.4" x2="1656.4" y2="448.4" stroke="#ffffff" stroke-opacity="0.14" stroke-width="1.6"/>
<text x="902.5" y="455.0" font-size="18.5" fill="#ccccdc" text-anchor="end" font-weight="normal" stroke="#ccccdc" stroke-width="0.3" >10</text>
<line x1="912.7" y1="411.1" x2="1656.4" y2="411.1" stroke="#ffffff" stroke-opacity="0.14" stroke-width="1.6"/>
<text x="902.5" y="417.7" font-size="18.5" fill="#ccccdc" text-anchor="end" font-weight="normal" stroke="#ccccdc" stroke-width="0.3" >20</text>
<line x1="912.7" y1="373.8" x2="1656.4" y2="373.8" stroke="#ffffff" stroke-opacity="0.14" stroke-width="1.6"/>
<text x="902.5" y="380.4" font-size="18.5" fill="#ccccdc" text-anchor="end" font-weight="normal" stroke="#ccccdc" stroke-width="0.3" >30</text>
<line x1="912.7" y1="336.5" x2="1656.4" y2="336.5" stroke="#ffffff" stroke-opacity="0.14" stroke-width="1.6"/>
<text x="902.5" y="343.1" font-size="18.5" fill="#ccccdc" text-anchor="end" font-weight="normal" stroke="#ccccdc" stroke-width="0.3" >40</text>
<line x1="912.7" y1="299.2" x2="1656.4" y2="299.2" stroke="#ffffff" stroke-opacity="0.14" stroke-width="1.6"/>
<text x="902.5" y="305.8" font-size="18.5" fill="#ccccdc" text-anchor="end" font-weight="normal" stroke="#ccccdc" stroke-width="0.3" >50</text>
<line x1="912.7" y1="261.9" x2="1656.4" y2="261.9" stroke="#ffffff" stroke-opacity="0.14" stroke-width="1.6"/>
<text x="902.5" y="268.5" font-size="18.5" fill="#ccccdc" text-anchor="end" font-weight="normal" stroke="#ccccdc" stroke-width="0.3" >60</text>
<line x1="912.7" y1="224.6" x2="1656.4" y2="224.6" stroke="#ffffff" stroke-opacity="0.14" stroke-width="1.6"/>
<text x="902.5" y="231.2" font-size="18.5" fill="#ccccdc" text-anchor="end" font-weight="normal" stroke="#ccccdc" stroke-width="0.3" >70</text>
<line x1="921.3" y1="224.6" x2="921.3" y2="450.4" stroke="#ffffff" stroke-opacity="0.14" stroke-width="1.6"/>
<text x="921.3" y="477.0" font-size="18.5" fill="#ccccdc" text-anchor="middle" font-weight="normal" stroke="#ccccdc" stroke-width="0.3" >17:30</text>
<line x1="1107.1" y1="224.6" x2="1107.1" y2="450.4" stroke="#ffffff" stroke-opacity="0.14" stroke-width="1.6"/>
<text x="1107.1" y="477.0" font-size="18.5" fill="#ccccdc" text-anchor="middle" font-weight="normal" stroke="#ccccdc" stroke-width="0.3" >17:35</text>
<line x1="1292.9" y1="224.6" x2="1292.9" y2="450.4" stroke="#ffffff" stroke-opacity="0.14" stroke-width="1.6"/>
<text x="1292.9" y="477.0" font-size="18.5" fill="#ccccdc" text-anchor="middle" font-weight="normal" stroke="#ccccdc" stroke-width="0.3" >17:40</text>
<line x1="1478.7" y1="224.6" x2="1478.7" y2="450.4" stroke="#ffffff" stroke-opacity="0.14" stroke-width="1.6"/>
<text x="1478.7" y="477.0" font-size="18.5" fill="#ccccdc" text-anchor="middle" font-weight="normal" stroke="#ccccdc" stroke-width="0.3" >17:45</text>
<path d="M915.06,262.15 L921.25,271.93 L927.44,278.64 L933.63,281.01 L939.82,286.18 L946.01,276.40 L952.20,267.46 L958.39,284.51 L964.58,285.63 L970.77,277.24 L976.96,272.35 L983.15,272.21 L989.34,276.82 L995.53,283.53 L1001.72,279.76 L1007.91,278.50 L1014.10,282.83 L1020.29,292.19 L1026.48,284.93 L1032.67,277.24 L1038.86,283.53 L1045.05,278.36 L1051.24,267.74 L1057.43,263.54 L1063.62,263.82 L1069.81,266.34 L1076.00,263.96 L1082.19,265.22 L1088.38,277.80 L1094.57,279.76 L1100.76,270.53 L1106.95,278.92 L1113.14,286.32 L1119.33,291.77 L1125.52,298.48 L1131.71,288.00 L1137.90,278.64 L1144.09,282.41 L1150.28,274.30 L1156.47,279.20 L1162.66,294.01 L1168.85,288.42 L1175.04,275.56 L1181.23,273.33 L1187.42,293.31 L1193.61,295.97 L1199.80,285.63 L1205.99,292.89 L1212.18,302.40 L1218.37,306.17 L1224.56,302.12 L1230.75,292.33 L1236.94,294.01 L1243.13,303.10 L1249.32,284.93 L1255.51,264.52 L1261.70,270.95 L1267.89,271.37 L1274.08,259.77 L1280.27,253.76 L1286.46,253.34 L1292.65,261.45 L1298.84,267.46 L1305.03,259.63 L1311.22,259.63 L1317.41,262.84 L1323.60,246.49 L1329.79,259.49 L1335.98,285.49 L1342.17,288.42 L1348.36,278.22 L1354.55,276.96 L1360.74,280.03 L1366.93,278.22 L1373.12,274.44 L1379.31,265.64 L1385.50,270.25 L1391.69,282.13 L1397.88,285.21 L1404.07,273.61 L1410.26,277.24 L1416.45,284.93 L1422.64,276.54 L1428.83,273.61 L1435.02,281.71 L1441.21,283.39 L1447.40,283.25 L1453.59,281.01 L1459.78,278.22 L1465.97,283.11 L1472.16,269.55 L1478.35,267.04 L1484.54,276.54 L1490.73,262.56 L1496.92,258.93 L1503.11,271.23 L1509.30,270.95 L1515.49,269.55 L1521.68,272.21 L1527.87,277.10 L1534.06,283.53 L1540.25,283.53 L1546.44,278.36 L1552.63,269.83 L1558.82,268.85 L1565.01,276.40 L1571.20,282.69 L1577.39,285.21 L1583.58,282.41 L1589.77,278.22 L1595.96,291.22 L1602.15,297.78 L1608.34,283.53 L1614.53,272.63 L1620.72,284.51 L1626.91,284.09 L1633.10,262.42 L1639.29,264.38 L1645.48,273.05 L1651.67,284.23" fill="none" stroke="#b877d9" stroke-width="0.7"/>
<path d="M915.06,373.96 L921.25,366.97 L927.44,373.96 L933.63,379.13 L939.82,378.85 L946.01,373.54 L952.20,373.26 L958.39,383.46 L964.58,386.53 L970.77,385.14 L976.96,372.00 L983.15,368.36 L989.34,374.65 L995.53,383.32 L1001.72,383.74 L1007.91,384.44 L1014.10,385.14 L1020.29,387.65 L1026.48,386.81 L1032.67,378.43 L1038.86,378.85 L1045.05,380.66 L1051.24,373.96 L1057.43,369.76 L1063.62,375.63 L1069.81,376.05 L1076.00,368.09 L1082.19,367.25 L1088.38,377.73 L1094.57,379.55 L1100.76,374.23 L1106.95,378.57 L1113.14,384.16 L1119.33,387.51 L1125.52,388.35 L1131.71,386.53 L1137.90,381.36 L1144.09,377.03 L1150.28,375.35 L1156.47,384.44 L1162.66,394.92 L1168.85,387.65 L1175.04,373.26 L1181.23,377.73 L1187.42,388.91 L1193.61,389.75 L1199.80,395.90 L1205.99,407.78 L1212.18,410.99 L1218.37,404.70 L1224.56,396.04 L1230.75,394.92 L1236.94,402.33 L1243.13,400.93 L1249.32,383.04 L1255.51,370.46 L1261.70,369.06 L1267.89,363.89 L1274.08,360.96 L1280.27,361.10 L1286.46,357.88 L1292.65,359.98 L1298.84,369.06 L1305.03,366.69 L1311.22,364.17 L1317.41,359.98 L1323.60,352.01 L1329.79,364.17 L1335.98,376.05 L1342.17,380.52 L1348.36,379.55 L1354.55,375.77 L1360.74,373.96 L1366.93,373.26 L1373.12,373.96 L1379.31,372.84 L1385.50,382.06 L1391.69,389.75 L1397.88,385.14 L1404.07,376.05 L1410.26,377.87 L1416.45,385.84 L1422.64,380.24 L1428.83,376.75 L1435.02,378.85 L1441.21,381.64 L1447.40,383.74 L1453.59,385.84 L1459.78,379.83 L1465.97,378.15 L1472.16,378.85 L1478.35,376.47 L1484.54,383.74 L1490.73,373.96 L1496.92,366.27 L1503.11,372.56 L1509.30,372.56 L1515.49,377.45 L1521.68,375.35 L1527.87,377.17 L1534.06,386.95 L1540.25,386.25 L1546.44,379.27 L1552.63,375.77 L1558.82,376.33 L1565.01,378.85 L1571.20,384.86 L1577.39,383.32 L1583.58,379.83 L1589.77,380.94 L1595.96,385.14 L1602.15,387.93 L1608.34,383.74 L1614.53,379.55 L1620.72,385.14 L1626.91,385.42 L1633.10,377.87 L1639.29,376.05 L1645.48,380.94 L1651.67,388.35" fill="none" stroke="#5794f2" stroke-width="0.7"/>
<g fill="#b877d9"><circle cx="915.06" cy="262.15" r="3.2"/><circle cx="921.25" cy="271.93" r="3.2"/><circle cx="927.44" cy="278.64" r="3.2"/><circle cx="933.63" cy="281.01" r="3.2"/><circle cx="939.82" cy="286.18" r="3.2"/><circle cx="946.01" cy="276.40" r="3.2"/><circle cx="952.20" cy="267.46" r="3.2"/><circle cx="958.39" cy="284.51" r="3.2"/><circle cx="964.58" cy="285.63" r="3.2"/><circle cx="970.77" cy="277.24" r="3.2"/><circle cx="976.96" cy="272.35" r="3.2"/><circle cx="983.15" cy="272.21" r="3.2"/><circle cx="989.34" cy="276.82" r="3.2"/><circle cx="995.53" cy="283.53" r="3.2"/><circle cx="1001.72" cy="279.76" r="3.2"/><circle cx="1007.91" cy="278.50" r="3.2"/><circle cx="1014.10" cy="282.83" r="3.2"/><circle cx="1020.29" cy="292.19" r="3.2"/><circle cx="1026.48" cy="284.93" r="3.2"/><circle cx="1032.67" cy="277.24" r="3.2"/><circle cx="1038.86" cy="283.53" r="3.2"/><circle cx="1045.05" cy="278.36" r="3.2"/><circle cx="1051.24" cy="267.74" r="3.2"/><circle cx="1057.43" cy="263.54" r="3.2"/><circle cx="1063.62" cy="263.82" r="3.2"/><circle cx="1069.81" cy="266.34" r="3.2"/><circle cx="1076.00" cy="263.96" r="3.2"/><circle cx="1082.19" cy="265.22" r="3.2"/><circle cx="1088.38" cy="277.80" r="3.2"/><circle cx="1094.57" cy="279.76" r="3.2"/><circle cx="1100.76" cy="270.53" r="3.2"/><circle cx="1106.95" cy="278.92" r="3.2"/><circle cx="1113.14" cy="286.32" r="3.2"/><circle cx="1119.33" cy="291.77" r="3.2"/><circle cx="1125.52" cy="298.48" r="3.2"/><circle cx="1131.71" cy="288.00" r="3.2"/><circle cx="1137.90" cy="278.64" r="3.2"/><circle cx="1144.09" cy="282.41" r="3.2"/><circle cx="1150.28" cy="274.30" r="3.2"/><circle cx="1156.47" cy="279.20" r="3.2"/><circle cx="1162.66" cy="294.01" r="3.2"/><circle cx="1168.85" cy="288.42" r="3.2"/><circle cx="1175.04" cy="275.56" r="3.2"/><circle cx="1181.23" cy="273.33" r="3.2"/><circle cx="1187.42" cy="293.31" r="3.2"/><circle cx="1193.61" cy="295.97" r="3.2"/><circle cx="1199.80" cy="285.63" r="3.2"/><circle cx="1205.99" cy="292.89" r="3.2"/><circle cx="1212.18" cy="302.40" r="3.2"/><circle cx="1218.37" cy="306.17" r="3.2"/><circle cx="1224.56" cy="302.12" r="3.2"/><circle cx="1230.75" cy="292.33" r="3.2"/><circle cx="1236.94" cy="294.01" r="3.2"/><circle cx="1243.13" cy="303.10" r="3.2"/><circle cx="1249.32" cy="284.93" r="3.2"/><circle cx="1255.51" cy="264.52" r="3.2"/><circle cx="1261.70" cy="270.95" r="3.2"/><circle cx="1267.89" cy="271.37" r="3.2"/><circle cx="1274.08" cy="259.77" r="3.2"/><circle cx="1280.27" cy="253.76" r="3.2"/><circle cx="1286.46" cy="253.34" r="3.2"/><circle cx="1292.65" cy="261.45" r="3.2"/><circle cx="1298.84" cy="267.46" r="3.2"/><circle cx="1305.03" cy="259.63" r="3.2"/><circle cx="1311.22" cy="259.63" r="3.2"/><circle cx="1317.41" cy="262.84" r="3.2"/><circle cx="1323.60" cy="246.49" r="3.2"/><circle cx="1329.79" cy="259.49" r="3.2"/><circle cx="1335.98" cy="285.49" r="3.2"/><circle cx="1342.17" cy="288.42" r="3.2"/><circle cx="1348.36" cy="278.22" r="3.2"/><circle cx="1354.55" cy="276.96" r="3.2"/><circle cx="1360.74" cy="280.03" r="3.2"/><circle cx="1366.93" cy="278.22" r="3.2"/><circle cx="1373.12" cy="274.44" r="3.2"/><circle cx="1379.31" cy="265.64" r="3.2"/><circle cx="1385.50" cy="270.25" r="3.2"/><circle cx="1391.69" cy="282.13" r="3.2"/><circle cx="1397.88" cy="285.21" r="3.2"/><circle cx="1404.07" cy="273.61" r="3.2"/><circle cx="1410.26" cy="277.24" r="3.2"/><circle cx="1416.45" cy="284.93" r="3.2"/><circle cx="1422.64" cy="276.54" r="3.2"/><circle cx="1428.83" cy="273.61" r="3.2"/><circle cx="1435.02" cy="281.71" r="3.2"/><circle cx="1441.21" cy="283.39" r="3.2"/><circle cx="1447.40" cy="283.25" r="3.2"/><circle cx="1453.59" cy="281.01" r="3.2"/><circle cx="1459.78" cy="278.22" r="3.2"/><circle cx="1465.97" cy="283.11" r="3.2"/><circle cx="1472.16" cy="269.55" r="3.2"/><circle cx="1478.35" cy="267.04" r="3.2"/><circle cx="1484.54" cy="276.54" r="3.2"/><circle cx="1490.73" cy="262.56" r="3.2"/><circle cx="1496.92" cy="258.93" r="3.2"/><circle cx="1503.11" cy="271.23" r="3.2"/><circle cx="1509.30" cy="270.95" r="3.2"/><circle cx="1515.49" cy="269.55" r="3.2"/><circle cx="1521.68" cy="272.21" r="3.2"/><circle cx="1527.87" cy="277.10" r="3.2"/><circle cx="1534.06" cy="283.53" r="3.2"/><circle cx="1540.25" cy="283.53" r="3.2"/><circle cx="1546.44" cy="278.36" r="3.2"/><circle cx="1552.63" cy="269.83" r="3.2"/><circle cx="1558.82" cy="268.85" r="3.2"/><circle cx="1565.01" cy="276.40" r="3.2"/><circle cx="1571.20" cy="282.69" r="3.2"/><circle cx="1577.39" cy="285.21" r="3.2"/><circle cx="1583.58" cy="282.41" r="3.2"/><circle cx="1589.77" cy="278.22" r="3.2"/><circle cx="1595.96" cy="291.22" r="3.2"/><circle cx="1602.15" cy="297.78" r="3.2"/><circle cx="1608.34" cy="283.53" r="3.2"/><circle cx="1614.53" cy="272.63" r="3.2"/><circle cx="1620.72" cy="284.51" r="3.2"/><circle cx="1626.91" cy="284.09" r="3.2"/><circle cx="1633.10" cy="262.42" r="3.2"/><circle cx="1639.29" cy="264.38" r="3.2"/><circle cx="1645.48" cy="273.05" r="3.2"/><circle cx="1651.67" cy="284.23" r="3.2"/></g>
<g fill="#5794f2"><circle cx="915.06" cy="373.96" r="3.2"/><circle cx="921.25" cy="366.97" r="3.2"/><circle cx="927.44" cy="373.96" r="3.2"/><circle cx="933.63" cy="379.13" r="3.2"/><circle cx="939.82" cy="378.85" r="3.2"/><circle cx="946.01" cy="373.54" r="3.2"/><circle cx="952.20" cy="373.26" r="3.2"/><circle cx="958.39" cy="383.46" r="3.2"/><circle cx="964.58" cy="386.53" r="3.2"/><circle cx="970.77" cy="385.14" r="3.2"/><circle cx="976.96" cy="372.00" r="3.2"/><circle cx="983.15" cy="368.36" r="3.2"/><circle cx="989.34" cy="374.65" r="3.2"/><circle cx="995.53" cy="383.32" r="3.2"/><circle cx="1001.72" cy="383.74" r="3.2"/><circle cx="1007.91" cy="384.44" r="3.2"/><circle cx="1014.10" cy="385.14" r="3.2"/><circle cx="1020.29" cy="387.65" r="3.2"/><circle cx="1026.48" cy="386.81" r="3.2"/><circle cx="1032.67" cy="378.43" r="3.2"/><circle cx="1038.86" cy="378.85" r="3.2"/><circle cx="1045.05" cy="380.66" r="3.2"/><circle cx="1051.24" cy="373.96" r="3.2"/><circle cx="1057.43" cy="369.76" r="3.2"/><circle cx="1063.62" cy="375.63" r="3.2"/><circle cx="1069.81" cy="376.05" r="3.2"/><circle cx="1076.00" cy="368.09" r="3.2"/><circle cx="1082.19" cy="367.25" r="3.2"/><circle cx="1088.38" cy="377.73" r="3.2"/><circle cx="1094.57" cy="379.55" r="3.2"/><circle cx="1100.76" cy="374.23" r="3.2"/><circle cx="1106.95" cy="378.57" r="3.2"/><circle cx="1113.14" cy="384.16" r="3.2"/><circle cx="1119.33" cy="387.51" r="3.2"/><circle cx="1125.52" cy="388.35" r="3.2"/><circle cx="1131.71" cy="386.53" r="3.2"/><circle cx="1137.90" cy="381.36" r="3.2"/><circle cx="1144.09" cy="377.03" r="3.2"/><circle cx="1150.28" cy="375.35" r="3.2"/><circle cx="1156.47" cy="384.44" r="3.2"/><circle cx="1162.66" cy="394.92" r="3.2"/><circle cx="1168.85" cy="387.65" r="3.2"/><circle cx="1175.04" cy="373.26" r="3.2"/><circle cx="1181.23" cy="377.73" r="3.2"/><circle cx="1187.42" cy="388.91" r="3.2"/><circle cx="1193.61" cy="389.75" r="3.2"/><circle cx="1199.80" cy="395.90" r="3.2"/><circle cx="1205.99" cy="407.78" r="3.2"/><circle cx="1212.18" cy="410.99" r="3.2"/><circle cx="1218.37" cy="404.70" r="3.2"/><circle cx="1224.56" cy="396.04" r="3.2"/><circle cx="1230.75" cy="394.92" r="3.2"/><circle cx="1236.94" cy="402.33" r="3.2"/><circle cx="1243.13" cy="400.93" r="3.2"/><circle cx="1249.32" cy="383.04" r="3.2"/><circle cx="1255.51" cy="370.46" r="3.2"/><circle cx="1261.70" cy="369.06" r="3.2"/><circle cx="1267.89" cy="363.89" r="3.2"/><circle cx="1274.08" cy="360.96" r="3.2"/><circle cx="1280.27" cy="361.10" r="3.2"/><circle cx="1286.46" cy="357.88" r="3.2"/><circle cx="1292.65" cy="359.98" r="3.2"/><circle cx="1298.84" cy="369.06" r="3.2"/><circle cx="1305.03" cy="366.69" r="3.2"/><circle cx="1311.22" cy="364.17" r="3.2"/><circle cx="1317.41" cy="359.98" r="3.2"/><circle cx="1323.60" cy="352.01" r="3.2"/><circle cx="1329.79" cy="364.17" r="3.2"/><circle cx="1335.98" cy="376.05" r="3.2"/><circle cx="1342.17" cy="380.52" r="3.2"/><circle cx="1348.36" cy="379.55" r="3.2"/><circle cx="1354.55" cy="375.77" r="3.2"/><circle cx="1360.74" cy="373.96" r="3.2"/><circle cx="1366.93" cy="373.26" r="3.2"/><circle cx="1373.12" cy="373.96" r="3.2"/><circle cx="1379.31" cy="372.84" r="3.2"/><circle cx="1385.50" cy="382.06" r="3.2"/><circle cx="1391.69" cy="389.75" r="3.2"/><circle cx="1397.88" cy="385.14" r="3.2"/><circle cx="1404.07" cy="376.05" r="3.2"/><circle cx="1410.26" cy="377.87" r="3.2"/><circle cx="1416.45" cy="385.84" r="3.2"/><circle cx="1422.64" cy="380.24" r="3.2"/><circle cx="1428.83" cy="376.75" r="3.2"/><circle cx="1435.02" cy="378.85" r="3.2"/><circle cx="1441.21" cy="381.64" r="3.2"/><circle cx="1447.40" cy="383.74" r="3.2"/><circle cx="1453.59" cy="385.84" r="3.2"/><circle cx="1459.78" cy="379.83" r="3.2"/><circle cx="1465.97" cy="378.15" r="3.2"/><circle cx="1472.16" cy="378.85" r="3.2"/><circle cx="1478.35" cy="376.47" r="3.2"/><circle cx="1484.54" cy="383.74" r="3.2"/><circle cx="1490.73" cy="373.96" r="3.2"/><circle cx="1496.92" cy="366.27" r="3.2"/><circle cx="1503.11" cy="372.56" r="3.2"/><circle cx="1509.30" cy="372.56" r="3.2"/><circle cx="1515.49" cy="377.45" r="3.2"/><circle cx="1521.68" cy="375.35" r="3.2"/><circle cx="1527.87" cy="377.17" r="3.2"/><circle cx="1534.06" cy="386.95" r="3.2"/><circle cx="1540.25" cy="386.25" r="3.2"/><circle cx="1546.44" cy="379.27" r="3.2"/><circle cx="1552.63" cy="375.77" r="3.2"/><circle cx="1558.82" cy="376.33" r="3.2"/><circle cx="1565.01" cy="378.85" r="3.2"/><circle cx="1571.20" cy="384.86" r="3.2"/><circle cx="1577.39" cy="383.32" r="3.2"/><circle cx="1583.58" cy="379.83" r="3.2"/><circle cx="1589.77" cy="380.94" r="3.2"/><circle cx="1595.96" cy="385.14" r="3.2"/><circle cx="1602.15" cy="387.93" r="3.2"/><circle cx="1608.34" cy="383.74" r="3.2"/><circle cx="1614.53" cy="379.55" r="3.2"/><circle cx="1620.72" cy="385.14" r="3.2"/><circle cx="1626.91" cy="385.42" r="3.2"/><circle cx="1633.10" cy="377.87" r="3.2"/><circle cx="1639.29" cy="376.05" r="3.2"/><circle cx="1645.48" cy="380.94" r="3.2"/><circle cx="1651.67" cy="388.35" r="3.2"/></g>
<line x1="897.5" y1="511.2" x2="912.5" y2="511.2" stroke="#5794f2" stroke-width="6.6" stroke-linecap="round"/>
<text x="937.0" y="515.7" font-size="19.5" fill="#ccccdc" text-anchor="start" font-weight="normal" stroke="#ccccdc" stroke-width="0.3" >logins</text>
<line x1="1016.5" y1="511.2" x2="1031.5" y2="511.2" stroke="#b877d9" stroke-width="6.6" stroke-linecap="round"/>
<text x="1056.0" y="515.7" font-size="19.5" fill="#ccccdc" text-anchor="start" font-weight="normal" stroke="#ccccdc" stroke-width="0.3" >logins (-1 hour)</text>
<text x="1249.1" y="180.0" font-size="23" fill="#ccccdc" font-weight="normal" stroke="#ccccdc" stroke-width="0.6" textLength="61.1" lengthAdjust="spacingAndGlyphs" >logins</text>
<circle cx="1523" cy="173.8" r="7.9" fill="none" stroke="#33a2e5" stroke-width="1.6"/>
<path d="M1522.6 169 V174.3 H1519.5" fill="none" stroke="#33a2e5" stroke-width="1.5"/>
<text x="1539.1" y="178.4" font-size="19.2" fill="#33a2e5" font-weight="normal" stroke="#33a2e5" stroke-width="0.5" textLength="141.5" lengthAdjust="spacingAndGlyphs" >Last 20 minutes</text>
<text x="1720.1" y="180.0" font-size="23" fill="#ccccdc" font-weight="normal" stroke="#ccccdc" stroke-width="0.6" textLength="85.4" lengthAdjust="spacingAndGlyphs" >Memory</text>
<text x="2140.8" y="180.0" font-size="23" fill="#ccccdc" font-weight="normal" stroke="#ccccdc" stroke-width="0.6" textLength="118.1" lengthAdjust="spacingAndGlyphs" >Google hits</text>
<path d="M1817.22,344.51 A98.4,98.4 0 0 1 1967.23,233.49 L1964.76,237.01 A94.10000000000001,94.10000000000001 0 0 0 1821.31,343.18 Z" fill="#68a657"/>
<path d="M1967.23,233.49 A98.4,98.4 0 0 1 2008.87,306.07 L2004.59,306.42 A94.10000000000001,94.10000000000001 0 0 0 1964.76,237.01 Z" fill="#e0802e"/>
<path d="M2008.87,306.07 A98.4,98.4 0 0 1 2004.38,344.51 L2000.29,343.18 A94.10000000000001,94.10000000000001 0 0 0 2004.59,306.42 Z" fill="#e8343b"/>
<path d="M1822.73,342.71 A92.60000000000001,92.60000000000001 0 1 1 1998.87,342.71 L1973.47,334.46 A65.9,65.9 0 1 0 1848.13,334.46 Z" fill="#232429"/>
<path d="M1822.73,342.71 A92.60000000000001,92.60000000000001 0 0 1 1871.27,230.36 L1882.67,254.51 A65.9,65.9 0 0 0 1848.13,334.46 Z" fill="#68a657"/>
<text x="1867.7" y="336.3" font-size="35" fill="#68a657" font-weight="normal" stroke="#68a657" stroke-width="0.6" textLength="85.9" lengthAdjust="spacingAndGlyphs" >114 B</text>
<path d="M2241.80,338.75 A94.0,94.0 0 0 1 2385.11,232.69 L2382.64,236.21 A89.7,89.7 0 0 0 2245.89,337.42 Z" fill="#68a657"/>
<path d="M2385.11,232.69 A94.0,94.0 0 0 1 2424.89,302.03 L2420.60,302.38 A89.7,89.7 0 0 0 2382.64,236.21 Z" fill="#e0802e"/>
<path d="M2424.89,302.03 A94.0,94.0 0 0 1 2420.60,338.75 L2416.51,337.42 A89.7,89.7 0 0 0 2420.60,302.38 Z" fill="#e8343b"/>
<path d="M2247.32,336.96 A88.2,88.2 0 1 1 2415.08,336.96 L2389.69,328.70 A61.5,61.5 0 1 0 2272.71,328.70 Z" fill="#232429"/>
<path d="M2247.32,336.96 A88.2,88.2 0 0 1 2250.04,275.18 L2274.61,285.63 A61.5,61.5 0 0 0 2272.71,328.70 Z" fill="#68a657"/>
<text x="2293.5" y="337.8" font-size="45.5" fill="#68a657" font-weight="normal" stroke="#68a657" stroke-width="0.7" textLength="73.0" lengthAdjust="spacingAndGlyphs" >57.1</text>
<text x="1720.1" y="411.0" font-size="23" fill="#ccccdc" font-weight="normal" stroke="#ccccdc" stroke-width="0.6" textLength="137.6" lengthAdjust="spacingAndGlyphs" >Support calls</text>
<text x="2140.8" y="411.0" font-size="23" fill="#ccccdc" font-weight="normal" stroke="#ccccdc" stroke-width="0.6" textLength="89.9" lengthAdjust="spacingAndGlyphs" >Sign ups</text>
<path d="M1709.80,501.96 L1714.29,503.24 L1718.61,500.04 L1722.94,504.04 L1727.42,509.33 L1731.91,505.64 L1736.71,483.22 L1741.03,508.05 L1745.84,500.36 L1750.64,502.92 L1754.65,507.73 L1759.45,501.96 L1763.94,506.44 L1768.26,496.03 L1772.58,503.24 L1777.07,510.93 L1781.55,501.32 L1785.88,508.37 L1790.68,493.95 L1795.01,506.12 L1799.49,515.73 L1803.98,508.85 L1808.78,500.04 L1813.10,508.37 L1817.91,517.34 L1822.23,512.53 L1826.72,502.44 L1831.20,512.85 L1835.53,516.05 L1839.85,505.16 L1844.33,503.56 L1849.14,497.64 L1853.94,498.44 L1858.43,502.44 L1862.75,500.04 L1867.56,498.76 L1871.88,500.04 L1876.36,509.33 L1881.17,498.12 L1885.65,506.76 L1889.98,508.85 L1894.78,499.72 L1899.11,507.25 L1903.59,496.52 L1908.07,495.55 L1912.40,496.52 L1916.72,500.84 L1921.21,503.56 L1925.69,500.04 L1930.02,496.52 L1934.82,494.91 L1939.14,506.44 L1943.63,492.03 L1948.11,496.03 L1952.92,499.72 L1957.24,504.52 L1962.05,499.24 L1966.37,503.56 L1970.86,515.25 L1975.34,509.65 L1980.14,523.26 L1984.47,516.05 L1988.79,501.32 L1993.28,513.65 L1997.76,510.45 L2002.57,507.25 L2006.89,522.14 L2011.21,537.67 L2016.02,528.07 L2020.18,483.70 L2024.99,489.15 L2029.31,489.63 L2033.64,500.84 L2038.12,492.03 L2042.60,509.33 L2047.41,496.52 L2051.73,509.33 L2056.06,502.44 L2060.54,507.73 L2065.35,508.05 L2069.83,509.33 L2074.15,504.52 L2078.48,509.65 L2083.28,512.05 L2087.77,500.36 L2092.25,518.46 L2097.06,517.98 L2101.38,505.16 L2106.19,508.05 L2110.19,510.45 L2110.19,538 L1709.80,538 Z" fill="#462228"/>
<path d="M1709.80,501.96 L1714.29,503.24 L1718.61,500.04 L1722.94,504.04 L1727.42,509.33 L1731.91,505.64 L1736.71,483.22 L1741.03,508.05 L1745.84,500.36 L1750.64,502.92 L1754.65,507.73 L1759.45,501.96 L1763.94,506.44 L1768.26,496.03 L1772.58,503.24 L1777.07,510.93 L1781.55,501.32 L1785.88,508.37 L1790.68,493.95 L1795.01,506.12 L1799.49,515.73 L1803.98,508.85 L1808.78,500.04 L1813.10,508.37 L1817.91,517.34 L1822.23,512.53 L1826.72,502.44 L1831.20,512.85 L1835.53,516.05 L1839.85,505.16 L1844.33,503.56 L1849.14,497.64 L1853.94,498.44 L1858.43,502.44 L1862.75,500.04 L1867.56,498.76 L1871.88,500.04 L1876.36,509.33 L1881.17,498.12 L1885.65,506.76 L1889.98,508.85 L1894.78,499.72 L1899.11,507.25 L1903.59,496.52 L1908.07,495.55 L1912.40,496.52 L1916.72,500.84 L1921.21,503.56 L1925.69,500.04 L1930.02,496.52 L1934.82,494.91 L1939.14,506.44 L1943.63,492.03 L1948.11,496.03 L1952.92,499.72 L1957.24,504.52 L1962.05,499.24 L1966.37,503.56 L1970.86,515.25 L1975.34,509.65 L1980.14,523.26 L1984.47,516.05 L1988.79,501.32 L1993.28,513.65 L1997.76,510.45 L2002.57,507.25 L2006.89,522.14 L2011.21,537.67 L2016.02,528.07 L2020.18,483.70 L2024.99,489.15 L2029.31,489.63 L2033.64,500.84 L2038.12,492.03 L2042.60,509.33 L2047.41,496.52 L2051.73,509.33 L2056.06,502.44 L2060.54,507.73 L2065.35,508.05 L2069.83,509.33 L2074.15,504.52 L2078.48,509.65 L2083.28,512.05 L2087.77,500.36 L2092.25,518.46 L2097.06,517.98 L2101.38,505.16 L2106.19,508.05 L2110.19,510.45" fill="none" stroke="#e8333b" stroke-width="1.7" stroke-linejoin="round"/>
<text x="1872.1" y="495.6" font-size="35.8" fill="#e8333b" font-weight="normal" stroke="#e8333b" stroke-width="0.6" textLength="77.3" lengthAdjust="spacingAndGlyphs" >84.9</text>
<path d="M2130.61,517.98 L2139.41,505.64 L2148.70,512.53 L2157.35,498.44 L2162.16,504.52 L2166.64,501.96 L2171.12,499.24 L2175.45,510.45 L2180.25,506.44 L2184.58,523.26 L2189.06,508.85 L2193.87,505.16 L2197.87,515.25 L2202.67,509.65 L2207.00,505.64 L2211.16,498.12 L2215.97,512.85 L2220.29,512.53 L2225.10,514.13 L2229.10,507.25 L2233.90,511.57 L2238.39,512.53 L2242.71,520.54 L2247.52,503.24 L2251.84,520.06 L2256.33,513.65 L2260.81,504.52 L2265.61,498.12 L2269.94,494.91 L2274.74,509.97 L2278.75,500.04 L2283.55,508.85 L2288.04,501.32 L2292.36,506.44 L2297.17,516.85 L2301.49,511.57 L2305.97,506.44 L2310.46,511.57 L2314.78,506.76 L2319.59,509.97 L2323.91,508.05 L2328.40,506.76 L2333.20,505.64 L2337.20,504.52 L2342.01,511.25 L2346.33,507.25 L2350.82,495.23 L2355.30,505.64 L2359.63,508.37 L2363.95,502.92 L2368.75,507.25 L2373.24,507.73 L2377.72,510.93 L2382.53,502.92 L2386.85,506.76 L2391.66,515.73 L2395.98,508.85 L2400.46,520.06 L2404.95,518.94 L2409.27,518.46 L2414.08,505.64 L2418.40,514.77 L2422.89,514.13 L2427.37,537.19 L2431.69,530.15 L2436.02,532.39 L2440.50,496.52 L2445.31,483.70 L2449.79,490.43 L2454.60,498.76 L2458.92,494.43 L2463.24,517.66 L2467.73,510.45 L2472.21,512.85 L2476.54,513.65 L2481.34,508.05 L2485.67,510.93 L2490.15,514.45 L2494.63,516.85 L2498.96,509.65 L2503.28,510.93 L2508.09,503.56 L2512.57,520.86 L2517.06,512.53 L2521.86,510.45 L2526.19,516.05 L2530.99,508.37 L2530.99,538 L2130.61,538 Z" fill="#213825"/>
<path d="M2130.61,517.98 L2139.41,505.64 L2148.70,512.53 L2157.35,498.44 L2162.16,504.52 L2166.64,501.96 L2171.12,499.24 L2175.45,510.45 L2180.25,506.44 L2184.58,523.26 L2189.06,508.85 L2193.87,505.16 L2197.87,515.25 L2202.67,509.65 L2207.00,505.64 L2211.16,498.12 L2215.97,512.85 L2220.29,512.53 L2225.10,514.13 L2229.10,507.25 L2233.90,511.57 L2238.39,512.53 L2242.71,520.54 L2247.52,503.24 L2251.84,520.06 L2256.33,513.65 L2260.81,504.52 L2265.61,498.12 L2269.94,494.91 L2274.74,509.97 L2278.75,500.04 L2283.55,508.85 L2288.04,501.32 L2292.36,506.44 L2297.17,516.85 L2301.49,511.57 L2305.97,506.44 L2310.46,511.57 L2314.78,506.76 L2319.59,509.97 L2323.91,508.05 L2328.40,506.76 L2333.20,505.64 L2337.20,504.52 L2342.01,511.25 L2346.33,507.25 L2350.82,495.23 L2355.30,505.64 L2359.63,508.37 L2363.95,502.92 L2368.75,507.25 L2373.24,507.73 L2377.72,510.93 L2382.53,502.92 L2386.85,506.76 L2391.66,515.73 L2395.98,508.85 L2400.46,520.06 L2404.95,518.94 L2409.27,518.46 L2414.08,505.64 L2418.40,514.77 L2422.89,514.13 L2427.37,537.19 L2431.69,530.15 L2436.02,532.39 L2440.50,496.52 L2445.31,483.70 L2449.79,490.43 L2454.60,498.76 L2458.92,494.43 L2463.24,517.66 L2467.73,510.45 L2472.21,512.85 L2476.54,513.65 L2481.34,508.05 L2485.67,510.93 L2490.15,514.45 L2494.63,516.85 L2498.96,509.65 L2503.28,510.93 L2508.09,503.56 L2512.57,520.86 L2517.06,512.53 L2521.86,510.45 L2526.19,516.05 L2530.99,508.37" fill="none" stroke="#38ab32" stroke-width="1.7" stroke-linejoin="round"/>
<text x="2298.4" y="495.9" font-size="37.2" fill="#36aa30" font-weight="normal" stroke="#36aa30" stroke-width="0.6" textLength="66.0" lengthAdjust="spacingAndGlyphs" >283</text>
<path d="M81.15,706.54 L85.66,702.62 L90.55,693.82 L94.46,691.27 L98.38,692.45 L102.29,689.90 L107.18,681.10 L111.49,683.05 L115.99,691.86 L120.88,692.45 L125.77,690.88 L129.69,688.92 L133.60,687.95 L137.91,680.12 L142.41,688.92 L146.71,710.45 L150.63,706.54 L155.13,695.77 L160.02,696.75 L164.52,704.58 L168.83,703.01 L173.13,698.71 L177.63,702.62 L182.52,702.23 L187.42,700.27 L191.33,701.06 L195.24,705.17 L199.16,705.56 L203.66,693.82 L207.96,689.32 L212.27,695.38 L216.38,698.71 L220.68,695.77 L225.19,693.23 L229.49,699.69 L234.38,704.19 L238.69,701.64 L243.19,699.10 L251.02,698.32 L255.91,691.47 L260.22,691.86 L264.72,697.73 L269.02,699.69 L273.52,695.77 L277.44,692.84 L281.94,679.14 L286.63,664.46 L291.14,679.14 L295.44,699.10 L299.35,699.30 L303.86,689.90 L308.36,685.99 L312.66,688.53 L316.97,692.45 L321.47,694.79 L325.77,694.40 L330.27,695.77 L334.19,695.19 L339.08,691.86 L343.39,688.92 L347.50,692.84 L351.80,706.14 L356.11,698.71 L360.61,687.95 L364.91,690.49 L369.41,693.23 L373.72,694.40 L378.22,701.64 L382.72,702.62 L387.03,702.23 L391.53,707.51 L395.83,708.88 L399.75,703.60 L404.25,693.82 L408.55,692.84 L412.86,702.62 L417.36,698.71 L422.25,694.40 L426.56,690.88 L431.06,695.77 L435.56,701.06 L439.86,703.01 L444.17,699.69 L448.67,698.32 L452.58,692.84 L457.48,691.86 L461.78,702.23 L466.28,706.54 L470.00,694.79 L478.31,696.75 L482.61,688.92 L487.50,685.40 L491.42,685.01 L496.31,688.53 L500.23,689.90 L505.12,695.77 L509.62,701.06 L513.53,701.64 L517.84,704.19 L522.73,705.56 L527.62,708.49 L531.54,708.88 L536.43,703.60 L540.34,699.69 L544.26,699.10 L549.15,702.62 L553.06,700.27 L557.95,698.32 L562.85,700.27 L567.74,699.69 L571.65,697.73 L575.57,693.82 L579.48,690.49 L584.37,702.62 L588.29,712.02 L592.20,712.02 L597.09,703.60 L601.99,701.64 L606.88,703.01 L611.38,703.60 L615.68,706.54 L619.60,710.45 L623.51,711.43 L627.43,698.71 L632.32,688.92 L637.21,692.84 L641.13,703.60 L646.02,708.49 L649.93,711.43 L653.85,717.30 L657.76,717.89 L662.65,710.06 L667.54,705.56 L671.46,702.23 L675.37,691.86 L680.26,688.92 L684.57,695.77 L689.07,698.71 L692.98,694.79 L697.49,691.27 L701.79,694.79 L706.10,693.23 L710.60,688.92 L715.10,687.36 L719.40,689.90 L723.71,688.92 L728.21,688.92 L732.71,695.77 L737.02,691.86 L740.93,694.40 L745.82,697.73 L750.32,694.40 L754.63,690.88 L758.93,687.95 L763.43,692.45 L767.35,694.40 L771.85,692.84 L776.15,691.27 L780.46,696.36 L784.96,691.86 L789.46,685.99 L793.77,695.19 L798.07,698.32 L802.57,691.27 L807.07,689.32 L811.38,690.49 L815.29,691.27 L820.19,693.23 L825.08,704.58 L828.99,708.88 L832.91,703.60 L836.82,704.58 L841.71,698.71 L846.60,698.32 L850.52,700.67 L854.43,701.06 L859.32,697.73 L865.00,693.82 L868.81,701.64 L872.72,698.71 L877.22,692.45 L881.53,696.36 L886.42,691.86 L890.33,692.45 L894.83,695.38 L899.14,686.58 L903.44,690.49 L907.95,696.36 L912.45,693.82 L916.75,692.84 L921.06,693.82 L925.56,696.36 L929.47,685.99 L933.97,691.86 L938.28,687.36 L942.58,685.99 L947.08,691.27 L951.59,687.95 L955.89,685.01 L960.20,692.45 L964.70,699.69 L968.61,690.49 L973.50,687.95 L977.42,687.95 L981.72,686.97 L986.22,689.90 L990.72,693.23 L995.03,692.45 L999.33,699.69 L1003.84,700.67 L1008.34,693.23 L1012.64,691.27 L1016.56,693.23 L1020.86,692.84 L1025.36,685.99 L1029.86,681.49 L1034.17,680.12 L1038.47,680.70 L1042.97,683.44 L1047.48,678.75 L1051.78,685.01 L1056.09,691.27 L1060.59,691.86 L1065.09,696.75 L1069.39,701.64 L1073.70,695.77 L1078.20,687.36 L1082.70,685.99 L1087.01,687.95 L1091.31,689.90 L1095.81,691.86 L1099.73,690.49 L1104.62,689.90 L1108.92,695.77 L1113.42,687.36 L1117.93,686.58 L1122.23,696.75 L1126.54,699.30 L1131.04,695.77 L1134.95,688.92 L1139.45,690.49 L1143.76,696.36 L1148.06,689.90 L1152.56,683.05 L1157.06,689.90 L1161.37,703.60 L1165.68,707.51 L1170.18,708.49 L1174.09,697.73 L1178.59,687.36 L1182.90,688.53 L1187.20,698.32 L1192.29,706.54 L1196.59,712.41 L1200.90,708.49 L1205.40,704.58 L1209.32,704.19 L1213.82,699.10 L1218.12,696.36 L1222.43,705.56 L1226.93,705.56 L1231.43,705.56 L1235.73,703.01 L1240.04,703.60 L1244.54,699.69 L1248.45,693.23 L1252.95,691.27 L1257.26,700.67 L1260.00,703.60 L1262.83,704.58 L1266.35,694.79 L1270.66,691.86 L1274.96,699.69 L1279.46,707.51 L1283.96,706.54 L1288.27,705.56 L1292.57,701.64 L1297.07,696.75 L1301.58,706.54 L1305.88,713.39 L1310.19,709.47 L1314.69,696.75 L1318.60,691.27 L1323.10,702.62 L1327.41,715.34 L1331.71,729.04 L1336.21,741.76 L1340.71,748.61 L1345.02,743.72 L1349.32,737.46 L1353.83,730.02 L1358.33,730.41 L1362.63,735.50 L1366.94,729.04 L1371.44,713.39 L1375.94,691.86 L1380.24,673.27 L1384.55,667.40 L1389.05,671.31 L1393.55,670.33 L1397.86,668.38 L1402.16,669.35 L1406.66,668.96 L1411.16,667.79 L1415.47,668.38 L1419.77,670.33 L1424.28,673.66 L1428.78,674.25 L1433.08,686.97 L1437.39,701.06 L1441.89,688.92 L1446.39,680.12 L1450.30,677.18 L1454.61,682.66 L1458.91,691.27 L1463.41,698.32 L1467.92,704.97 L1472.22,710.45 L1476.14,710.84 L1480.44,700.67 L1484.94,697.14 L1489.44,701.06 L1493.36,695.77 L1497.66,695.19 L1501.97,699.10 L1506.47,702.23 L1510.97,706.54 L1515.27,706.14 L1519.58,702.62 L1524.08,700.27 L1528.58,698.32 L1532.89,702.62 L1537.19,703.01 L1541.69,695.77 L1546.19,690.49 L1550.50,688.92 L1554.80,697.14 L1559.31,702.62 L1563.81,700.27 L1568.11,703.60 L1572.42,706.93 L1576.92,701.64 L1581.42,698.32 L1585.72,696.75 L1590.03,697.14 L1594.53,708.10 L1599.03,713.39 L1603.34,703.60 L1607.25,699.10 L1611.56,703.01 L1616.06,708.10 L1620.56,706.54 L1624.86,697.73 L1629.17,702.23 L1633.67,706.93 L1638.17,694.79 L1642.48,690.49 L1646.78,693.23 L1651.28,697.73 L1651.28,912.2 L81.15,912.2 Z" fill="#14304f"/>
<path d="M81.15,758.40 L85.66,756.44 L90.55,750.57 L94.46,747.63 L98.38,749.00 L103.27,744.70 L107.18,738.43 L111.49,740.20 L115.99,746.65 L120.88,747.24 L125.77,745.28 L129.69,744.70 L133.60,748.61 L137.91,741.37 L142.41,747.63 L146.71,765.24 L150.63,755.46 L155.13,746.07 L160.02,750.57 L164.52,756.44 L168.83,753.50 L173.13,752.13 L177.63,757.03 L182.52,756.44 L187.42,754.09 L191.33,753.89 L195.24,754.48 L199.16,753.11 L203.66,746.65 L207.96,747.24 L212.27,751.94 L216.38,750.57 L220.68,748.61 L225.19,749.59 L229.49,753.11 L234.38,756.44 L238.69,755.07 L243.19,754.09 L247.10,756.05 L252.00,751.55 L255.91,745.68 L260.22,746.65 L264.72,751.55 L269.02,750.57 L273.52,747.63 L277.44,750.57 L281.94,735.89 L286.24,721.21 L290.74,737.85 L295.44,756.44 L299.35,753.50 L303.86,742.74 L308.36,738.43 L312.66,741.76 L316.97,748.02 L321.47,749.59 L325.77,749.20 L330.27,751.15 L334.58,747.63 L339.08,743.72 L343.39,744.70 L347.50,749.59 L351.80,760.35 L356.11,755.46 L360.61,745.28 L364.91,745.68 L369.41,749.59 L373.72,751.15 L378.22,753.50 L382.72,753.89 L387.03,755.07 L391.53,761.72 L395.83,761.33 L399.75,753.11 L404.25,744.70 L408.55,745.28 L412.86,755.85 L417.36,755.07 L422.25,742.15 L426.56,744.70 L431.06,751.55 L435.56,755.85 L439.86,756.44 L444.17,750.57 L448.67,749.59 L452.58,747.24 L457.48,746.65 L461.78,754.48 L466.28,758.00 L470.00,745.68 L473.81,749.59 L478.70,756.44 L483.59,746.65 L488.48,740.20 L492.40,739.41 L496.31,746.07 L501.20,748.22 L505.12,751.55 L510.01,756.44 L513.92,757.03 L518.23,758.40 L522.73,758.00 L527.62,762.31 L531.54,762.31 L535.84,755.07 L540.34,749.98 L544.26,753.11 L548.76,758.40 L553.06,752.52 L557.95,747.24 L562.85,749.98 L567.74,750.57 L572.63,751.94 L576.55,751.55 L579.48,749.20 L584.37,758.40 L588.29,765.64 L592.20,766.22 L596.51,759.37 L601.01,753.50 L605.90,755.07 L610.79,756.83 L615.29,760.35 L619.60,766.22 L623.51,765.24 L628.41,752.52 L632.32,740.20 L636.82,740.78 L641.13,756.44 L646.02,759.77 L649.93,761.33 L654.43,768.18 L658.74,767.20 L663.04,761.33 L667.54,759.37 L671.46,754.48 L675.37,741.76 L680.26,741.76 L684.57,753.50 L689.07,755.85 L692.40,745.68 L697.49,743.72 L701.79,752.52 L706.10,749.98 L711.18,742.74 L715.49,743.72 L719.40,745.68 L723.71,745.68 L728.21,744.70 L732.71,749.98 L737.02,749.59 L740.93,749.59 L745.82,749.20 L750.32,747.24 L754.63,746.65 L758.93,745.68 L763.43,750.57 L767.35,753.11 L771.85,747.24 L776.15,746.65 L780.46,750.57 L784.96,745.68 L789.46,740.78 L793.77,747.24 L798.07,751.94 L802.57,747.24 L807.07,740.78 L811.38,745.28 L815.29,750.57 L820.19,751.94 L824.69,759.37 L828.99,763.68 L832.91,758.40 L837.80,755.46 L842.30,753.11 L846.60,752.52 L850.91,755.46 L855.41,754.48 L859.32,748.61 L865.00,745.68 L868.81,755.46 L872.72,754.48 L877.22,745.28 L881.53,751.15 L886.42,751.55 L890.33,746.65 L894.83,746.65 L899.14,743.72 L903.44,747.24 L907.95,751.55 L912.45,748.61 L916.75,749.98 L925.56,749.20 L929.47,742.15 L933.97,749.98 L938.28,744.70 L942.58,739.80 L947.08,746.07 L951.59,744.70 L955.89,743.72 L960.20,745.28 L964.70,753.11 L968.61,747.24 L973.50,744.11 L977.42,743.72 L981.72,743.33 L986.22,749.59 L990.72,752.52 L995.03,747.24 L999.33,751.94 L1003.84,756.44 L1008.34,747.63 L1012.64,742.15 L1016.56,743.72 L1020.86,747.24 L1025.36,741.76 L1029.86,736.87 L1034.17,736.87 L1038.47,739.41 L1042.97,738.83 L1047.48,736.87 L1051.78,745.68 L1056.09,748.02 L1060.59,745.68 L1065.09,751.55 L1069.39,755.46 L1073.70,749.20 L1078.20,742.74 L1082.70,740.20 L1087.01,742.15 L1091.31,745.68 L1095.81,746.65 L1099.73,743.33 L1104.62,744.70 L1108.92,751.55 L1113.42,743.72 L1117.93,742.15 L1122.23,755.07 L1126.54,755.07 L1131.04,748.61 L1134.95,743.72 L1139.45,747.24 L1143.76,753.89 L1148.06,745.68 L1152.56,737.85 L1157.06,744.70 L1161.37,756.44 L1165.68,757.42 L1170.18,759.77 L1174.09,749.98 L1178.59,739.41 L1182.90,742.74 L1187.20,753.50 L1192.29,761.33 L1196.59,764.85 L1200.90,765.24 L1205.40,759.77 L1209.32,753.89 L1213.82,747.63 L1218.12,748.02 L1222.43,761.33 L1226.93,759.77 L1231.43,758.40 L1235.73,757.42 L1240.04,760.94 L1244.54,754.48 L1248.45,748.61 L1252.95,751.15 L1257.26,757.03 L1260.00,757.42 L1262.83,757.42 L1266.35,750.57 L1270.66,749.20 L1274.96,753.50 L1279.46,760.94 L1283.96,760.94 L1288.27,757.81 L1292.57,753.89 L1297.07,749.98 L1301.58,759.77 L1305.88,768.77 L1310.19,766.22 L1314.69,748.61 L1318.60,746.65 L1323.10,759.77 L1327.41,769.16 L1331.71,778.94 L1336.21,786.77 L1340.71,789.71 L1345.02,786.38 L1349.32,782.47 L1353.83,775.03 L1358.33,778.55 L1362.63,785.79 L1366.94,773.07 L1371.44,755.46 L1375.94,743.72 L1380.24,731.98 L1384.55,727.08 L1389.05,731.59 L1393.55,731.00 L1397.86,729.04 L1402.16,729.63 L1406.66,730.41 L1411.16,727.67 L1415.47,727.67 L1419.77,730.02 L1424.28,734.32 L1428.78,736.87 L1433.08,748.61 L1437.39,753.50 L1441.89,743.72 L1446.39,737.85 L1450.30,733.93 L1454.61,736.87 L1458.91,744.70 L1463.41,752.52 L1467.92,758.40 L1472.22,759.77 L1476.14,757.81 L1480.44,750.57 L1484.94,752.52 L1489.44,756.44 L1493.36,748.61 L1497.66,749.98 L1501.97,753.50 L1506.47,755.46 L1510.97,759.37 L1515.27,758.98 L1519.58,754.48 L1524.08,751.55 L1528.58,749.59 L1532.89,752.52 L1537.19,753.11 L1541.69,746.65 L1546.19,745.68 L1550.50,748.02 L1554.80,753.50 L1559.31,753.50 L1563.81,751.94 L1568.11,759.77 L1572.42,760.35 L1576.92,754.48 L1581.42,752.52 L1585.72,745.28 L1590.03,747.24 L1594.53,761.33 L1599.03,763.68 L1603.34,753.50 L1607.25,751.94 L1611.56,757.03 L1616.06,759.77 L1620.56,760.35 L1624.86,753.89 L1629.17,753.11 L1633.67,757.81 L1638.17,748.61 L1642.48,745.68 L1646.78,751.55 L1651.28,753.11 L1651.28,912.2 L81.15,912.2 Z" fill="#215487"/>
<path d="M81.15,808.69 L85.66,807.32 L90.55,803.41 L94.46,801.45 L98.38,800.08 L103.27,797.14 L107.18,797.14 L111.49,798.51 L115.99,802.04 L120.88,804.38 L125.77,802.82 L129.69,800.47 L133.60,802.82 L137.91,800.08 L142.41,805.36 L146.71,812.60 L150.63,804.38 L155.13,802.04 L160.02,806.73 L164.52,805.95 L168.83,803.41 L173.13,806.34 L177.63,809.86 L182.52,810.84 L187.42,809.28 L191.33,807.91 L195.24,808.69 L199.16,805.36 L203.66,802.04 L207.96,802.43 L212.27,803.99 L216.38,803.99 L220.68,802.04 L225.19,803.41 L229.49,807.91 L234.38,808.30 L238.69,805.75 L243.19,807.32 L247.10,807.91 L252.00,802.43 L255.91,797.53 L260.22,800.08 L264.72,803.99 L269.02,802.82 L273.52,802.43 L277.44,802.43 L281.94,794.60 L286.24,788.73 L290.74,797.53 L295.44,806.34 L299.35,804.38 L303.86,796.56 L308.36,792.64 L312.66,795.58 L316.97,802.04 L321.47,805.95 L325.77,806.73 L330.27,804.38 L334.58,799.49 L339.08,798.90 L343.39,801.45 L347.50,803.99 L351.80,809.86 L356.11,806.34 L360.61,800.47 L364.91,799.49 L369.41,802.82 L373.72,805.36 L378.22,805.36 L382.72,807.91 L387.03,810.65 L391.53,814.17 L395.83,813.78 L399.75,806.73 L404.25,799.49 L408.55,802.43 L412.86,812.21 L417.36,807.32 L422.25,797.53 L426.56,800.08 L431.06,803.99 L435.56,805.36 L439.86,806.73 L444.17,805.36 L448.67,804.38 L452.58,803.99 L457.48,804.38 L461.78,807.91 L466.28,808.30 L470.00,798.51 L473.81,800.47 L478.70,807.91 L483.59,801.45 L488.09,797.53 L492.40,799.49 L496.70,802.04 L501.20,801.45 L506.10,805.36 L510.40,807.32 L514.90,807.91 L518.82,808.69 L522.73,807.91 L527.62,810.25 L531.54,811.23 L535.84,806.34 L540.34,802.04 L544.26,804.38 L548.76,809.86 L553.06,806.34 L557.95,803.41 L562.85,804.38 L567.74,804.38 L572.63,804.77 L577.52,805.36 L580.46,803.99 L584.37,808.30 L588.29,813.19 L592.20,813.78 L596.51,807.32 L601.99,803.99 L606.29,806.34 L610.79,810.25 L615.29,813.19 L619.60,813.19 L623.51,810.65 L627.82,802.43 L632.32,794.99 L636.82,798.12 L641.13,807.32 L646.02,811.23 L649.93,812.80 L654.43,816.13 L658.74,813.19 L663.04,809.86 L667.54,811.23 L671.46,805.36 L675.37,798.12 L680.26,800.08 L684.57,803.99 L689.07,803.41 L692.98,796.56 L697.49,797.53 L701.79,804.38 L706.10,802.43 L711.18,798.51 L715.49,798.90 L719.40,800.86 L723.71,801.45 L728.21,801.45 L732.71,805.36 L737.02,803.41 L740.93,804.77 L745.82,806.34 L750.32,800.08 L754.63,798.90 L758.93,800.86 L763.43,806.34 L767.35,807.32 L771.85,802.43 L776.15,802.82 L780.46,804.77 L784.96,800.47 L789.46,794.99 L793.77,802.04 L798.07,807.91 L802.57,800.86 L807.07,796.16 L811.38,801.45 L815.29,804.38 L820.19,805.95 L824.69,812.60 L828.99,814.17 L832.91,811.23 L837.80,809.28 L842.30,807.91 L846.60,809.86 L850.91,808.69 L855.41,804.38 L859.32,801.45 L865.00,801.45 L868.81,806.34 L872.72,803.41 L877.22,799.49 L881.53,805.95 L886.42,802.04 L890.33,799.49 L894.83,801.45 L899.14,800.47 L903.44,802.82 L907.95,803.99 L912.45,800.86 L916.75,802.04 L921.06,803.41 L925.56,806.73 L929.47,800.86 L933.97,804.38 L938.28,799.49 L942.58,796.56 L947.08,801.45 L951.59,800.08 L955.89,798.90 L960.20,802.04 L964.70,810.65 L968.61,803.41 L973.50,798.12 L977.42,798.51 L981.72,800.08 L986.22,804.77 L990.72,807.91 L995.03,802.82 L999.33,804.38 L1003.84,807.32 L1008.34,803.99 L1012.64,798.12 L1016.56,798.12 L1020.86,801.45 L1025.36,798.51 L1029.86,792.64 L1034.17,792.25 L1038.47,796.16 L1042.97,796.56 L1047.48,796.16 L1051.78,801.45 L1056.09,802.04 L1060.59,800.08 L1065.09,805.95 L1069.39,806.34 L1073.70,802.43 L1078.20,802.04 L1082.70,798.90 L1087.01,798.90 L1091.31,803.41 L1095.81,803.41 L1099.73,801.45 L1104.62,800.86 L1108.92,805.95 L1113.42,800.86 L1117.93,796.56 L1122.23,807.91 L1126.54,810.25 L1131.04,804.77 L1134.95,800.08 L1139.45,800.08 L1143.76,803.99 L1148.06,802.04 L1152.56,796.56 L1157.06,797.53 L1161.37,807.91 L1165.68,809.28 L1170.18,807.91 L1174.09,803.41 L1178.59,796.56 L1182.90,796.95 L1187.20,804.38 L1192.29,813.19 L1196.59,813.19 L1200.90,811.23 L1205.40,810.65 L1209.32,808.30 L1213.82,802.04 L1218.12,804.38 L1222.43,807.32 L1226.93,806.73 L1231.43,806.73 L1235.73,807.32 L1240.04,808.69 L1244.54,803.41 L1248.45,800.08 L1252.95,804.38 L1257.26,809.28 L1260.00,808.30 L1262.83,807.91 L1266.35,806.73 L1270.66,804.38 L1274.96,806.73 L1279.46,811.23 L1283.96,809.28 L1288.27,807.32 L1292.57,804.77 L1297.07,802.04 L1301.58,810.25 L1305.88,819.06 L1310.19,815.15 L1314.69,801.45 L1318.60,802.04 L1323.10,813.19 L1327.41,820.04 L1331.71,824.93 L1336.21,830.22 L1340.71,831.39 L1345.02,828.26 L1349.32,823.56 L1353.83,817.69 L1358.33,822.39 L1362.63,826.89 L1366.94,817.10 L1371.44,806.34 L1375.94,800.47 L1380.24,793.03 L1384.55,788.73 L1389.05,790.68 L1393.55,788.34 L1397.86,785.79 L1402.16,789.12 L1406.66,790.29 L1411.16,787.75 L1415.47,787.75 L1419.77,787.16 L1424.28,791.08 L1428.78,794.99 L1433.08,802.43 L1437.39,804.38 L1441.89,800.08 L1446.39,796.56 L1450.30,793.62 L1454.61,795.58 L1458.91,799.49 L1463.41,804.38 L1467.92,811.82 L1472.22,812.21 L1476.14,808.30 L1480.44,805.95 L1484.94,809.86 L1489.44,809.28 L1493.36,802.82 L1497.66,805.95 L1501.97,807.91 L1506.47,806.73 L1510.97,808.69 L1515.27,807.91 L1519.58,805.95 L1524.08,806.73 L1528.58,804.77 L1532.89,807.32 L1537.19,804.38 L1541.69,797.53 L1546.19,798.51 L1550.50,800.86 L1554.80,805.36 L1559.31,804.38 L1563.81,804.38 L1568.11,811.23 L1572.42,811.23 L1576.92,805.36 L1581.42,805.36 L1585.72,802.43 L1590.03,803.41 L1594.53,813.19 L1599.03,813.19 L1603.34,805.36 L1607.25,803.41 L1611.56,807.32 L1616.06,810.65 L1620.56,812.60 L1624.86,807.32 L1629.17,803.41 L1633.67,807.32 L1638.17,803.41 L1642.48,800.08 L1646.78,803.99 L1651.28,808.30 L1651.28,912.2 L81.15,912.2 Z" fill="#3d6185"/>
<path d="M81.15,859.57 L85.66,857.61 L89.57,854.68 L94.46,852.33 L98.96,855.66 L103.27,853.89 L107.18,851.94 L111.49,854.87 L115.99,858.20 L120.88,857.61 L125.77,855.26 L129.69,854.87 L133.60,854.87 L137.91,855.66 L142.41,860.74 L146.71,860.74 L150.63,856.24 L155.13,856.83 L160.02,860.16 L163.93,854.68 L168.43,850.96 L173.13,857.81 L177.63,860.16 L182.52,858.20 L187.42,859.57 L191.33,858.79 L195.24,860.16 L199.16,859.18 L203.66,856.83 L207.96,858.20 L212.27,857.22 L216.38,856.24 L220.68,857.22 L225.19,857.61 L229.49,861.14 L234.38,860.16 L238.69,857.22 L243.19,858.79 L247.10,858.79 L252.00,854.87 L255.91,851.35 L260.22,855.26 L264.72,856.83 L269.02,855.85 L273.52,855.85 L277.44,853.31 L281.94,849.78 L286.24,853.31 L290.74,856.24 L295.44,857.61 L299.35,860.16 L303.86,855.26 L308.36,851.74 L312.66,855.66 L316.97,857.22 L321.47,856.24 L325.77,857.61 L330.27,857.61 L334.58,855.66 L339.08,858.79 L343.39,857.81 L347.50,857.61 L351.80,861.14 L356.11,859.18 L360.61,855.26 L364.91,853.70 L369.41,854.29 L373.72,859.18 L378.22,858.79 L382.72,854.87 L387.03,858.79 L391.53,862.11 L395.83,862.11 L399.75,860.74 L404.25,855.66 L408.55,856.83 L412.86,859.18 L417.36,857.22 L422.25,855.66 L426.56,858.79 L431.06,857.61 L435.56,855.26 L439.86,860.16 L444.17,856.83 L448.67,854.87 L452.58,856.24 L457.48,859.18 L461.78,860.74 L466.28,859.18 L470.00,853.70 L473.81,856.24 L478.70,860.16 L483.59,856.24 L488.09,855.26 L492.40,856.83 L496.70,859.18 L501.20,857.22 L506.10,858.20 L510.40,858.79 L514.90,859.18 L518.82,860.74 L522.73,861.14 L527.62,864.07 L531.54,862.70 L535.84,856.83 L540.34,855.26 L544.26,858.20 L548.76,859.57 L553.06,857.22 L557.95,857.22 L562.85,859.18 L567.74,858.79 L572.63,859.18 L577.52,859.57 L580.46,857.61 L584.37,857.61 L588.29,863.09 L592.20,862.11 L596.51,857.61 L601.99,859.57 L606.29,860.16 L610.79,860.74 L615.29,862.70 L619.60,861.14 L623.51,860.16 L627.82,857.22 L632.32,853.70 L636.82,856.83 L641.13,859.57 L646.02,862.70 L649.93,864.07 L654.43,864.66 L658.74,863.48 L663.04,860.16 L667.54,859.57 L671.46,858.79 L675.37,854.29 L680.26,856.83 L684.57,859.18 L689.07,857.61 L692.98,853.31 L697.49,855.26 L701.79,859.18 L706.10,859.18 L711.18,857.61 L715.49,856.24 L719.40,858.20 L723.71,860.16 L728.21,859.18 L732.71,858.20 L737.02,857.61 L740.93,857.61 L745.82,859.57 L750.32,856.24 L754.63,854.29 L758.93,856.83 L763.43,860.74 L767.35,860.16 L771.85,855.26 L776.15,856.83 L780.46,857.61 L784.96,853.70 L789.46,854.29 L793.77,861.14 L798.07,861.14 L802.57,855.26 L807.07,853.31 L811.38,855.26 L815.29,857.22 L820.19,859.57 L824.69,861.53 L828.99,861.53 L832.91,862.11 L837.80,862.70 L842.30,859.57 L846.60,862.11 L850.91,861.14 L855.41,856.83 L859.32,855.66 L865.00,856.24 L868.81,857.22 L872.72,854.87 L877.22,854.87 L881.53,858.79 L886.42,852.92 L890.33,854.29 L894.83,856.24 L899.14,854.29 L903.44,855.66 L907.95,857.22 L912.45,856.83 L916.75,854.87 L921.06,855.26 L925.56,856.24 L929.47,860.16 L933.97,860.16 L938.28,852.92 L942.58,850.37 L947.08,855.26 L951.59,854.87 L955.89,854.29 L960.20,855.26 L964.70,862.70 L968.61,860.16 L973.50,857.61 L977.42,854.87 L981.72,854.29 L986.22,858.79 L990.72,861.14 L995.03,856.24 L999.33,856.24 L1003.84,859.18 L1008.34,854.87 L1012.64,851.74 L1016.56,855.66 L1020.86,856.24 L1025.36,853.70 L1029.86,854.29 L1034.17,854.87 L1038.47,852.92 L1042.97,851.74 L1047.48,852.33 L1051.78,855.26 L1056.09,854.87 L1060.59,853.31 L1065.09,856.83 L1069.39,860.74 L1073.70,857.61 L1078.20,857.61 L1082.70,856.24 L1087.01,855.26 L1091.31,857.22 L1095.81,857.22 L1099.73,855.66 L1104.62,856.83 L1108.92,859.18 L1113.42,854.29 L1117.93,854.29 L1122.23,861.53 L1126.54,860.16 L1131.04,855.26 L1134.95,852.33 L1139.45,855.26 L1143.76,857.61 L1148.06,858.20 L1152.56,855.26 L1157.06,854.87 L1161.37,860.74 L1165.68,862.11 L1170.18,861.53 L1174.09,854.87 L1178.59,852.92 L1182.90,855.26 L1187.20,859.57 L1192.29,860.16 L1196.59,860.74 L1200.90,861.14 L1205.40,862.11 L1209.32,861.53 L1213.82,857.61 L1218.12,857.61 L1222.43,858.79 L1226.93,855.66 L1231.43,853.31 L1235.73,856.24 L1240.04,855.66 L1244.54,852.33 L1248.45,851.74 L1252.95,856.83 L1257.26,858.20 L1260.00,857.22 L1262.83,856.24 L1266.35,857.61 L1270.66,860.16 L1274.96,862.11 L1279.46,862.70 L1283.96,862.11 L1288.27,859.18 L1292.57,856.83 L1297.07,855.66 L1301.58,861.14 L1305.88,866.03 L1310.19,862.70 L1314.69,855.26 L1318.60,856.83 L1323.10,862.70 L1327.41,863.48 L1331.71,867.01 L1336.21,871.90 L1340.71,873.86 L1345.02,870.53 L1349.32,866.61 L1353.83,866.61 L1358.33,869.94 L1362.63,869.35 L1366.94,861.14 L1371.44,854.87 L1375.94,853.31 L1380.24,850.37 L1384.55,849.00 L1389.05,849.00 L1393.55,847.44 L1397.86,849.00 L1402.16,852.92 L1406.66,851.74 L1411.16,850.37 L1415.47,847.83 L1419.77,844.50 L1424.28,850.96 L1428.78,856.83 L1433.08,859.18 L1437.39,858.79 L1441.89,856.83 L1446.39,855.66 L1450.30,855.26 L1454.61,855.66 L1458.91,855.26 L1463.41,860.16 L1467.92,863.48 L1472.22,860.74 L1476.14,856.83 L1480.44,857.61 L1484.94,861.53 L1489.44,858.79 L1493.36,856.83 L1497.66,857.61 L1501.97,858.79 L1506.47,860.16 L1510.97,861.53 L1515.27,858.20 L1519.58,857.22 L1524.08,857.61 L1528.58,856.83 L1532.89,860.16 L1537.19,855.26 L1541.69,851.74 L1546.19,854.87 L1550.50,855.26 L1554.80,857.22 L1559.31,856.24 L1563.81,856.83 L1568.11,862.11 L1572.42,862.11 L1576.92,858.20 L1581.42,856.24 L1585.72,856.24 L1590.03,857.61 L1594.53,861.14 L1599.03,860.16 L1603.34,858.79 L1607.25,858.20 L1611.56,858.79 L1616.06,861.53 L1620.56,862.11 L1624.86,860.16 L1629.17,858.79 L1633.67,861.53 L1638.17,857.61 L1642.48,856.83 L1646.78,858.79 L1651.28,862.70 L1651.28,912.2 L81.15,912.2 Z" fill="#7a8f9b"/>
<line x1="78" y1="912.2" x2="1654" y2="912.2" stroke="#ffffff" stroke-opacity="0.13" stroke-width="1.6"/>
<text x="69.5" y="918.8" font-size="18.5" fill="#ccccdc" text-anchor="end" font-weight="normal" stroke="#ccccdc" stroke-width="0.3" >0</text>
<line x1="78" y1="817.6" x2="1654" y2="817.6" stroke="#ffffff" stroke-opacity="0.13" stroke-width="1.6"/>
<text x="69.5" y="824.2" font-size="18.5" fill="#ccccdc" text-anchor="end" font-weight="normal" stroke="#ccccdc" stroke-width="0.3" >50</text>
<line x1="78" y1="723.1" x2="1654" y2="723.1" stroke="#ffffff" stroke-opacity="0.13" stroke-width="1.6"/>
<text x="69.5" y="729.7" font-size="18.5" fill="#ccccdc" text-anchor="end" font-weight="normal" stroke="#ccccdc" stroke-width="0.3" >100</text>
<line x1="78" y1="630.3" x2="1654" y2="630.3" stroke="#ffffff" stroke-opacity="0.13" stroke-width="1.6"/>
<text x="69.5" y="636.9" font-size="18.5" fill="#ccccdc" text-anchor="end" font-weight="normal" stroke="#ccccdc" stroke-width="0.3" >150</text>
<line x1="85.6" y1="630.3" x2="85.6" y2="914.2" stroke="#ffffff" stroke-opacity="0.13" stroke-width="1.6"/>
<text x="85.6" y="940.3" font-size="18.5" fill="#ccccdc" text-anchor="middle" font-weight="normal" stroke="#ccccdc" stroke-width="0.3" >16:50</text>
<line x1="216.8" y1="630.3" x2="216.8" y2="914.2" stroke="#ffffff" stroke-opacity="0.13" stroke-width="1.6"/>
<text x="216.8" y="940.3" font-size="18.5" fill="#ccccdc" text-anchor="middle" font-weight="normal" stroke="#ccccdc" stroke-width="0.3" >16:55</text>
<line x1="348.1" y1="630.3" x2="348.1" y2="914.2" stroke="#ffffff" stroke-opacity="0.13" stroke-width="1.6"/>
<text x="348.1" y="940.3" font-size="18.5" fill="#ccccdc" text-anchor="middle" font-weight="normal" stroke="#ccccdc" stroke-width="0.3" >17:00</text>
<line x1="479.3" y1="630.3" x2="479.3" y2="914.2" stroke="#ffffff" stroke-opacity="0.13" stroke-width="1.6"/>
<text x="479.3" y="940.3" font-size="18.5" fill="#ccccdc" text-anchor="middle" font-weight="normal" stroke="#ccccdc" stroke-width="0.3" >17:05</text>
<line x1="610.5" y1="630.3" x2="610.5" y2="914.2" stroke="#ffffff" stroke-opacity="0.13" stroke-width="1.6"/>
<text x="610.5" y="940.3" font-size="18.5" fill="#ccccdc" text-anchor="middle" font-weight="normal" stroke="#ccccdc" stroke-width="0.3" >17:10</text>
<line x1="741.8" y1="630.3" x2="741.8" y2="914.2" stroke="#ffffff" stroke-opacity="0.13" stroke-width="1.6"/>
<text x="741.8" y="940.3" font-size="18.5" fill="#ccccdc" text-anchor="middle" font-weight="normal" stroke="#ccccdc" stroke-width="0.3" >17:15</text>
<line x1="873.0" y1="630.3" x2="873.0" y2="914.2" stroke="#ffffff" stroke-opacity="0.13" stroke-width="1.6"/>
<text x="873.0" y="940.3" font-size="18.5" fill="#ccccdc" text-anchor="middle" font-weight="normal" stroke="#ccccdc" stroke-width="0.3" >17:20</text>
<line x1="1004.2" y1="630.3" x2="1004.2" y2="914.2" stroke="#ffffff" stroke-opacity="0.13" stroke-width="1.6"/>
<text x="1004.2" y="940.3" font-size="18.5" fill="#ccccdc" text-anchor="middle" font-weight="normal" stroke="#ccccdc" stroke-width="0.3" >17:25</text>
<line x1="1135.4" y1="630.3" x2="1135.4" y2="914.2" stroke="#ffffff" stroke-opacity="0.13" stroke-width="1.6"/>
<text x="1135.4" y="940.3" font-size="18.5" fill="#ccccdc" text-anchor="middle" font-weight="normal" stroke="#ccccdc" stroke-width="0.3" >17:30</text>
<line x1="1266.7" y1="630.3" x2="1266.7" y2="914.2" stroke="#ffffff" stroke-opacity="0.13" stroke-width="1.6"/>
<text x="1266.7" y="940.3" font-size="18.5" fill="#ccccdc" text-anchor="middle" font-weight="normal" stroke="#ccccdc" stroke-width="0.3" >17:35</text>
<line x1="1397.9" y1="630.3" x2="1397.9" y2="914.2" stroke="#ffffff" stroke-opacity="0.13" stroke-width="1.6"/>
<text x="1397.9" y="940.3" font-size="18.5" fill="#ccccdc" text-anchor="middle" font-weight="normal" stroke="#ccccdc" stroke-width="0.3" >17:40</text>
<line x1="1529.1" y1="630.3" x2="1529.1" y2="914.2" stroke="#ffffff" stroke-opacity="0.13" stroke-width="1.6"/>
<text x="1529.1" y="940.3" font-size="18.5" fill="#ccccdc" text-anchor="middle" font-weight="normal" stroke="#ccccdc" stroke-width="0.3" >17:45</text>
<path d="M81.15,706.54 L85.66,702.62 L90.55,693.82 L94.46,691.27 L98.38,692.45 L102.29,689.90 L107.18,681.10 L111.49,683.05 L115.99,691.86 L120.88,692.45 L125.77,690.88 L129.69,688.92 L133.60,687.95 L137.91,680.12 L142.41,688.92 L146.71,710.45 L150.63,706.54 L155.13,695.77 L160.02,696.75 L164.52,704.58 L168.83,703.01 L173.13,698.71 L177.63,702.62 L182.52,702.23 L187.42,700.27 L191.33,701.06 L195.24,705.17 L199.16,705.56 L203.66,693.82 L207.96,689.32 L212.27,695.38 L216.38,698.71 L220.68,695.77 L225.19,693.23 L229.49,699.69 L234.38,704.19 L238.69,701.64 L243.19,699.10 L251.02,698.32 L255.91,691.47 L260.22,691.86 L264.72,697.73 L269.02,699.69 L273.52,695.77 L277.44,692.84 L281.94,679.14 L286.63,664.46 L291.14,679.14 L295.44,699.10 L299.35,699.30 L303.86,689.90 L308.36,685.99 L312.66,688.53 L316.97,692.45 L321.47,694.79 L325.77,694.40 L330.27,695.77 L334.19,695.19 L339.08,691.86 L343.39,688.92 L347.50,692.84 L351.80,706.14 L356.11,698.71 L360.61,687.95 L364.91,690.49 L369.41,693.23 L373.72,694.40 L378.22,701.64 L382.72,702.62 L387.03,702.23 L391.53,707.51 L395.83,708.88 L399.75,703.60 L404.25,693.82 L408.55,692.84 L412.86,702.62 L417.36,698.71 L422.25,694.40 L426.56,690.88 L431.06,695.77 L435.56,701.06 L439.86,703.01 L444.17,699.69 L448.67,698.32 L452.58,692.84 L457.48,691.86 L461.78,702.23 L466.28,706.54 L470.00,694.79 L478.31,696.75 L482.61,688.92 L487.50,685.40 L491.42,685.01 L496.31,688.53 L500.23,689.90 L505.12,695.77 L509.62,701.06 L513.53,701.64 L517.84,704.19 L522.73,705.56 L527.62,708.49 L531.54,708.88 L536.43,703.60 L540.34,699.69 L544.26,699.10 L549.15,702.62 L553.06,700.27 L557.95,698.32 L562.85,700.27 L567.74,699.69 L571.65,697.73 L575.57,693.82 L579.48,690.49 L584.37,702.62 L588.29,712.02 L592.20,712.02 L597.09,703.60 L601.99,701.64 L606.88,703.01 L611.38,703.60 L615.68,706.54 L619.60,710.45 L623.51,711.43 L627.43,698.71 L632.32,688.92 L637.21,692.84 L641.13,703.60 L646.02,708.49 L649.93,711.43 L653.85,717.30 L657.76,717.89 L662.65,710.06 L667.54,705.56 L671.46,702.23 L675.37,691.86 L680.26,688.92 L684.57,695.77 L689.07,698.71 L692.98,694.79 L697.49,691.27 L701.79,694.79 L706.10,693.23 L710.60,688.92 L715.10,687.36 L719.40,689.90 L723.71,688.92 L728.21,688.92 L732.71,695.77 L737.02,691.86 L740.93,694.40 L745.82,697.73 L750.32,694.40 L754.63,690.88 L758.93,687.95 L763.43,692.45 L767.35,694.40 L771.85,692.84 L776.15,691.27 L780.46,696.36 L784.96,691.86 L789.46,685.99 L793.77,695.19 L798.07,698.32 L802.57,691.27 L807.07,689.32 L811.38,690.49 L815.29,691.27 L820.19,693.23 L825.08,704.58 L828.99,708.88 L832.91,703.60 L836.82,704.58 L841.71,698.71 L846.60,698.32 L850.52,700.67 L854.43,701.06 L859.32,697.73 L865.00,693.82 L868.81,701.64 L872.72,698.71 L877.22,692.45 L881.53,696.36 L886.42,691.86 L890.33,692.45 L894.83,695.38 L899.14,686.58 L903.44,690.49 L907.95,696.36 L912.45,693.82 L916.75,692.84 L921.06,693.82 L925.56,696.36 L929.47,685.99 L933.97,691.86 L938.28,687.36 L942.58,685.99 L947.08,691.27 L951.59,687.95 L955.89,685.01 L960.20,692.45 L964.70,699.69 L968.61,690.49 L973.50,687.95 L977.42,687.95 L981.72,686.97 L986.22,689.90 L990.72,693.23 L995.03,692.45 L999.33,699.69 L1003.84,700.67 L1008.34,693.23 L1012.64,691.27 L1016.56,693.23 L1020.86,692.84 L1025.36,685.99 L1029.86,681.49 L1034.17,680.12 L1038.47,680.70 L1042.97,683.44 L1047.48,678.75 L1051.78,685.01 L1056.09,691.27 L1060.59,691.86 L1065.09,696.75 L1069.39,701.64 L1073.70,695.77 L1078.20,687.36 L1082.70,685.99 L1087.01,687.95 L1091.31,689.90 L1095.81,691.86 L1099.73,690.49 L1104.62,689.90 L1108.92,695.77 L1113.42,687.36 L1117.93,686.58 L1122.23,696.75 L1126.54,699.30 L1131.04,695.77 L1134.95,688.92 L1139.45,690.49 L1143.76,696.36 L1148.06,689.90 L1152.56,683.05 L1157.06,689.90 L1161.37,703.60 L1165.68,707.51 L1170.18,708.49 L1174.09,697.73 L1178.59,687.36 L1182.90,688.53 L1187.20,698.32 L1192.29,706.54 L1196.59,712.41 L1200.90,708.49 L1205.40,704.58 L1209.32,704.19 L1213.82,699.10 L1218.12,696.36 L1222.43,705.56 L1226.93,705.56 L1231.43,705.56 L1235.73,703.01 L1240.04,703.60 L1244.54,699.69 L1248.45,693.23 L1252.95,691.27 L1257.26,700.67 L1260.00,703.60 L1262.83,704.58 L1266.35,694.79 L1270.66,691.86 L1274.96,699.69 L1279.46,707.51 L1283.96,706.54 L1288.27,705.56 L1292.57,701.64 L1297.07,696.75 L1301.58,706.54 L1305.88,713.39 L1310.19,709.47 L1314.69,696.75 L1318.60,691.27 L1323.10,702.62 L1327.41,715.34 L1331.71,729.04 L1336.21,741.76 L1340.71,748.61 L1345.02,743.72 L1349.32,737.46 L1353.83,730.02 L1358.33,730.41 L1362.63,735.50 L1366.94,729.04 L1371.44,713.39 L1375.94,691.86 L1380.24,673.27 L1384.55,667.40 L1389.05,671.31 L1393.55,670.33 L1397.86,668.38 L1402.16,669.35 L1406.66,668.96 L1411.16,667.79 L1415.47,668.38 L1419.77,670.33 L1424.28,673.66 L1428.78,674.25 L1433.08,686.97 L1437.39,701.06 L1441.89,688.92 L1446.39,680.12 L1450.30,677.18 L1454.61,682.66 L1458.91,691.27 L1463.41,698.32 L1467.92,704.97 L1472.22,710.45 L1476.14,710.84 L1480.44,700.67 L1484.94,697.14 L1489.44,701.06 L1493.36,695.77 L1497.66,695.19 L1501.97,699.10 L1506.47,702.23 L1510.97,706.54 L1515.27,706.14 L1519.58,702.62 L1524.08,700.27 L1528.58,698.32 L1532.89,702.62 L1537.19,703.01 L1541.69,695.77 L1546.19,690.49 L1550.50,688.92 L1554.80,697.14 L1559.31,702.62 L1563.81,700.27 L1568.11,703.60 L1572.42,706.93 L1576.92,701.64 L1581.42,698.32 L1585.72,696.75 L1590.03,697.14 L1594.53,708.10 L1599.03,713.39 L1603.34,703.60 L1607.25,699.10 L1611.56,703.01 L1616.06,708.10 L1620.56,706.54 L1624.86,697.73 L1629.17,702.23 L1633.67,706.93 L1638.17,694.79 L1642.48,690.49 L1646.78,693.23 L1651.28,697.73" fill="none" stroke="#1a5189" stroke-width="1.6" stroke-linejoin="round"/>
<path d="M81.15,758.40 L85.66,756.44 L90.55,750.57 L94.46,747.63 L98.38,749.00 L103.27,744.70 L107.18,738.43 L111.49,740.20 L115.99,746.65 L120.88,747.24 L125.77,745.28 L129.69,744.70 L133.60,748.61 L137.91,741.37 L142.41,747.63 L146.71,765.24 L150.63,755.46 L155.13,746.07 L160.02,750.57 L164.52,756.44 L168.83,753.50 L173.13,752.13 L177.63,757.03 L182.52,756.44 L187.42,754.09 L191.33,753.89 L195.24,754.48 L199.16,753.11 L203.66,746.65 L207.96,747.24 L212.27,751.94 L216.38,750.57 L220.68,748.61 L225.19,749.59 L229.49,753.11 L234.38,756.44 L238.69,755.07 L243.19,754.09 L247.10,756.05 L252.00,751.55 L255.91,745.68 L260.22,746.65 L264.72,751.55 L269.02,750.57 L273.52,747.63 L277.44,750.57 L281.94,735.89 L286.24,721.21 L290.74,737.85 L295.44,756.44 L299.35,753.50 L303.86,742.74 L308.36,738.43 L312.66,741.76 L316.97,748.02 L321.47,749.59 L325.77,749.20 L330.27,751.15 L334.58,747.63 L339.08,743.72 L343.39,744.70 L347.50,749.59 L351.80,760.35 L356.11,755.46 L360.61,745.28 L364.91,745.68 L369.41,749.59 L373.72,751.15 L378.22,753.50 L382.72,753.89 L387.03,755.07 L391.53,761.72 L395.83,761.33 L399.75,753.11 L404.25,744.70 L408.55,745.28 L412.86,755.85 L417.36,755.07 L422.25,742.15 L426.56,744.70 L431.06,751.55 L435.56,755.85 L439.86,756.44 L444.17,750.57 L448.67,749.59 L452.58,747.24 L457.48,746.65 L461.78,754.48 L466.28,758.00 L470.00,745.68 L473.81,749.59 L478.70,756.44 L483.59,746.65 L488.48,740.20 L492.40,739.41 L496.31,746.07 L501.20,748.22 L505.12,751.55 L510.01,756.44 L513.92,757.03 L518.23,758.40 L522.73,758.00 L527.62,762.31 L531.54,762.31 L535.84,755.07 L540.34,749.98 L544.26,753.11 L548.76,758.40 L553.06,752.52 L557.95,747.24 L562.85,749.98 L567.74,750.57 L572.63,751.94 L576.55,751.55 L579.48,749.20 L584.37,758.40 L588.29,765.64 L592.20,766.22 L596.51,759.37 L601.01,753.50 L605.90,755.07 L610.79,756.83 L615.29,760.35 L619.60,766.22 L623.51,765.24 L628.41,752.52 L632.32,740.20 L636.82,740.78 L641.13,756.44 L646.02,759.77 L649.93,761.33 L654.43,768.18 L658.74,767.20 L663.04,761.33 L667.54,759.37 L671.46,754.48 L675.37,741.76 L680.26,741.76 L684.57,753.50 L689.07,755.85 L692.40,745.68 L697.49,743.72 L701.79,752.52 L706.10,749.98 L711.18,742.74 L715.49,743.72 L719.40,745.68 L723.71,745.68 L728.21,744.70 L732.71,749.98 L737.02,749.59 L740.93,749.59 L745.82,749.20 L750.32,747.24 L754.63,746.65 L758.93,745.68 L763.43,750.57 L767.35,753.11 L771.85,747.24 L776.15,746.65 L780.46,750.57 L784.96,745.68 L789.46,740.78 L793.77,747.24 L798.07,751.94 L802.57,747.24 L807.07,740.78 L811.38,745.28 L815.29,750.57 L820.19,751.94 L824.69,759.37 L828.99,763.68 L832.91,758.40 L837.80,755.46 L842.30,753.11 L846.60,752.52 L850.91,755.46 L855.41,754.48 L859.32,748.61 L865.00,745.68 L868.81,755.46 L872.72,754.48 L877.22,745.28 L881.53,751.15 L886.42,751.55 L890.33,746.65 L894.83,746.65 L899.14,743.72 L903.44,747.24 L907.95,751.55 L912.45,748.61 L916.75,749.98 L925.56,749.20 L929.47,742.15 L933.97,749.98 L938.28,744.70 L942.58,739.80 L947.08,746.07 L951.59,744.70 L955.89,743.72 L960.20,745.28 L964.70,753.11 L968.61,747.24 L973.50,744.11 L977.42,743.72 L981.72,743.33 L986.22,749.59 L990.72,752.52 L995.03,747.24 L999.33,751.94 L1003.84,756.44 L1008.34,747.63 L1012.64,742.15 L1016.56,743.72 L1020.86,747.24 L1025.36,741.76 L1029.86,736.87 L1034.17,736.87 L1038.47,739.41 L1042.97,738.83 L1047.48,736.87 L1051.78,745.68 L1056.09,748.02 L1060.59,745.68 L1065.09,751.55 L1069.39,755.46 L1073.70,749.20 L1078.20,742.74 L1082.70,740.20 L1087.01,742.15 L1091.31,745.68 L1095.81,746.65 L1099.73,743.33 L1104.62,744.70 L1108.92,751.55 L1113.42,743.72 L1117.93,742.15 L1122.23,755.07 L1126.54,755.07 L1131.04,748.61 L1134.95,743.72 L1139.45,747.24 L1143.76,753.89 L1148.06,745.68 L1152.56,737.85 L1157.06,744.70 L1161.37,756.44 L1165.68,757.42 L1170.18,759.77 L1174.09,749.98 L1178.59,739.41 L1182.90,742.74 L1187.20,753.50 L1192.29,761.33 L1196.59,764.85 L1200.90,765.24 L1205.40,759.77 L1209.32,753.89 L1213.82,747.63 L1218.12,748.02 L1222.43,761.33 L1226.93,759.77 L1231.43,758.40 L1235.73,757.42 L1240.04,760.94 L1244.54,754.48 L1248.45,748.61 L1252.95,751.15 L1257.26,757.03 L1260.00,757.42 L1262.83,757.42 L1266.35,750.57 L1270.66,749.20 L1274.96,753.50 L1279.46,760.94 L1283.96,760.94 L1288.27,757.81 L1292.57,753.89 L1297.07,749.98 L1301.58,759.77 L1305.88,768.77 L1310.19,766.22 L1314.69,748.61 L1318.60,746.65 L1323.10,759.77 L1327.41,769.16 L1331.71,778.94 L1336.21,786.77 L1340.71,789.71 L1345.02,786.38 L1349.32,782.47 L1353.83,775.03 L1358.33,778.55 L1362.63,785.79 L1366.94,773.07 L1371.44,755.46 L1375.94,743.72 L1380.24,731.98 L1384.55,727.08 L1389.05,731.59 L1393.55,731.00 L1397.86,729.04 L1402.16,729.63 L1406.66,730.41 L1411.16,727.67 L1415.47,727.67 L1419.77,730.02 L1424.28,734.32 L1428.78,736.87 L1433.08,748.61 L1437.39,753.50 L1441.89,743.72 L1446.39,737.85 L1450.30,733.93 L1454.61,736.87 L1458.91,744.70 L1463.41,752.52 L1467.92,758.40 L1472.22,759.77 L1476.14,757.81 L1480.44,750.57 L1484.94,752.52 L1489.44,756.44 L1493.36,748.61 L1497.66,749.98 L1501.97,753.50 L1506.47,755.46 L1510.97,759.37 L1515.27,758.98 L1519.58,754.48 L1524.08,751.55 L1528.58,749.59 L1532.89,752.52 L1537.19,753.11 L1541.69,746.65 L1546.19,745.68 L1550.50,748.02 L1554.80,753.50 L1559.31,753.50 L1563.81,751.94 L1568.11,759.77 L1572.42,760.35 L1576.92,754.48 L1581.42,752.52 L1585.72,745.28 L1590.03,747.24 L1594.53,761.33 L1599.03,763.68 L1603.34,753.50 L1607.25,751.94 L1611.56,757.03 L1616.06,759.77 L1620.56,760.35 L1624.86,753.89 L1629.17,753.11 L1633.67,757.81 L1638.17,748.61 L1642.48,745.68 L1646.78,751.55 L1651.28,753.11" fill="none" stroke="#2e82cf" stroke-width="1.6" stroke-linejoin="round"/>
<path d="M81.15,808.69 L85.66,807.32 L90.55,803.41 L94.46,801.45 L98.38,800.08 L103.27,797.14 L107.18,797.14 L111.49,798.51 L115.99,802.04 L120.88,804.38 L125.77,802.82 L129.69,800.47 L133.60,802.82 L137.91,800.08 L142.41,805.36 L146.71,812.60 L150.63,804.38 L155.13,802.04 L160.02,806.73 L164.52,805.95 L168.83,803.41 L173.13,806.34 L177.63,809.86 L182.52,810.84 L187.42,809.28 L191.33,807.91 L195.24,808.69 L199.16,805.36 L203.66,802.04 L207.96,802.43 L212.27,803.99 L216.38,803.99 L220.68,802.04 L225.19,803.41 L229.49,807.91 L234.38,808.30 L238.69,805.75 L243.19,807.32 L247.10,807.91 L252.00,802.43 L255.91,797.53 L260.22,800.08 L264.72,803.99 L269.02,802.82 L273.52,802.43 L277.44,802.43 L281.94,794.60 L286.24,788.73 L290.74,797.53 L295.44,806.34 L299.35,804.38 L303.86,796.56 L308.36,792.64 L312.66,795.58 L316.97,802.04 L321.47,805.95 L325.77,806.73 L330.27,804.38 L334.58,799.49 L339.08,798.90 L343.39,801.45 L347.50,803.99 L351.80,809.86 L356.11,806.34 L360.61,800.47 L364.91,799.49 L369.41,802.82 L373.72,805.36 L378.22,805.36 L382.72,807.91 L387.03,810.65 L391.53,814.17 L395.83,813.78 L399.75,806.73 L404.25,799.49 L408.55,802.43 L412.86,812.21 L417.36,807.32 L422.25,797.53 L426.56,800.08 L431.06,803.99 L435.56,805.36 L439.86,806.73 L444.17,805.36 L448.67,804.38 L452.58,803.99 L457.48,804.38 L461.78,807.91 L466.28,808.30 L470.00,798.51 L473.81,800.47 L478.70,807.91 L483.59,801.45 L488.09,797.53 L492.40,799.49 L496.70,802.04 L501.20,801.45 L506.10,805.36 L510.40,807.32 L514.90,807.91 L518.82,808.69 L522.73,807.91 L527.62,810.25 L531.54,811.23 L535.84,806.34 L540.34,802.04 L544.26,804.38 L548.76,809.86 L553.06,806.34 L557.95,803.41 L562.85,804.38 L567.74,804.38 L572.63,804.77 L577.52,805.36 L580.46,803.99 L584.37,808.30 L588.29,813.19 L592.20,813.78 L596.51,807.32 L601.99,803.99 L606.29,806.34 L610.79,810.25 L615.29,813.19 L619.60,813.19 L623.51,810.65 L627.82,802.43 L632.32,794.99 L636.82,798.12 L641.13,807.32 L646.02,811.23 L649.93,812.80 L654.43,816.13 L658.74,813.19 L663.04,809.86 L667.54,811.23 L671.46,805.36 L675.37,798.12 L680.26,800.08 L684.57,803.99 L689.07,803.41 L692.98,796.56 L697.49,797.53 L701.79,804.38 L706.10,802.43 L711.18,798.51 L715.49,798.90 L719.40,800.86 L723.71,801.45 L728.21,801.45 L732.71,805.36 L737.02,803.41 L740.93,804.77 L745.82,806.34 L750.32,800.08 L754.63,798.90 L758.93,800.86 L763.43,806.34 L767.35,807.32 L771.85,802.43 L776.15,802.82 L780.46,804.77 L784.96,800.47 L789.46,794.99 L793.77,802.04 L798.07,807.91 L802.57,800.86 L807.07,796.16 L811.38,801.45 L815.29,804.38 L820.19,805.95 L824.69,812.60 L828.99,814.17 L832.91,811.23 L837.80,809.28 L842.30,807.91 L846.60,809.86 L850.91,808.69 L855.41,804.38 L859.32,801.45 L865.00,801.45 L868.81,806.34 L872.72,803.41 L877.22,799.49 L881.53,805.95 L886.42,802.04 L890.33,799.49 L894.83,801.45 L899.14,800.47 L903.44,802.82 L907.95,803.99 L912.45,800.86 L916.75,802.04 L921.06,803.41 L925.56,806.73 L929.47,800.86 L933.97,804.38 L938.28,799.49 L942.58,796.56 L947.08,801.45 L951.59,800.08 L955.89,798.90 L960.20,802.04 L964.70,810.65 L968.61,803.41 L973.50,798.12 L977.42,798.51 L981.72,800.08 L986.22,804.77 L990.72,807.91 L995.03,802.82 L999.33,804.38 L1003.84,807.32 L1008.34,803.99 L1012.64,798.12 L1016.56,798.12 L1020.86,801.45 L1025.36,798.51 L1029.86,792.64 L1034.17,792.25 L1038.47,796.16 L1042.97,796.56 L1047.48,796.16 L1051.78,801.45 L1056.09,802.04 L1060.59,800.08 L1065.09,805.95 L1069.39,806.34 L1073.70,802.43 L1078.20,802.04 L1082.70,798.90 L1087.01,798.90 L1091.31,803.41 L1095.81,803.41 L1099.73,801.45 L1104.62,800.86 L1108.92,805.95 L1113.42,800.86 L1117.93,796.56 L1122.23,807.91 L1126.54,810.25 L1131.04,804.77 L1134.95,800.08 L1139.45,800.08 L1143.76,803.99 L1148.06,802.04 L1152.56,796.56 L1157.06,797.53 L1161.37,807.91 L1165.68,809.28 L1170.18,807.91 L1174.09,803.41 L1178.59,796.56 L1182.90,796.95 L1187.20,804.38 L1192.29,813.19 L1196.59,813.19 L1200.90,811.23 L1205.40,810.65 L1209.32,808.30 L1213.82,802.04 L1218.12,804.38 L1222.43,807.32 L1226.93,806.73 L1231.43,806.73 L1235.73,807.32 L1240.04,808.69 L1244.54,803.41 L1248.45,800.08 L1252.95,804.38 L1257.26,809.28 L1260.00,808.30 L1262.83,807.91 L1266.35,806.73 L1270.66,804.38 L1274.96,806.73 L1279.46,811.23 L1283.96,809.28 L1288.27,807.32 L1292.57,804.77 L1297.07,802.04 L1301.58,810.25 L1305.88,819.06 L1310.19,815.15 L1314.69,801.45 L1318.60,802.04 L1323.10,813.19 L1327.41,820.04 L1331.71,824.93 L1336.21,830.22 L1340.71,831.39 L1345.02,828.26 L1349.32,823.56 L1353.83,817.69 L1358.33,822.39 L1362.63,826.89 L1366.94,817.10 L1371.44,806.34 L1375.94,800.47 L1380.24,793.03 L1384.55,788.73 L1389.05,790.68 L1393.55,788.34 L1397.86,785.79 L1402.16,789.12 L1406.66,790.29 L1411.16,787.75 L1415.47,787.75 L1419.77,787.16 L1424.28,791.08 L1428.78,794.99 L1433.08,802.43 L1437.39,804.38 L1441.89,800.08 L1446.39,796.56 L1450.30,793.62 L1454.61,795.58 L1458.91,799.49 L1463.41,804.38 L1467.92,811.82 L1472.22,812.21 L1476.14,808.30 L1480.44,805.95 L1484.94,809.86 L1489.44,809.28 L1493.36,802.82 L1497.66,805.95 L1501.97,807.91 L1506.47,806.73 L1510.97,808.69 L1515.27,807.91 L1519.58,805.95 L1524.08,806.73 L1528.58,804.77 L1532.89,807.32 L1537.19,804.38 L1541.69,797.53 L1546.19,798.51 L1550.50,800.86 L1554.80,805.36 L1559.31,804.38 L1563.81,804.38 L1568.11,811.23 L1572.42,811.23 L1576.92,805.36 L1581.42,805.36 L1585.72,802.43 L1590.03,803.41 L1594.53,813.19 L1599.03,813.19 L1603.34,805.36 L1607.25,803.41 L1611.56,807.32 L1616.06,810.65 L1620.56,812.60 L1624.86,807.32 L1629.17,803.41 L1633.67,807.32 L1638.17,803.41 L1642.48,800.08 L1646.78,803.99 L1651.28,808.30" fill="none" stroke="#5fa2dd" stroke-width="1.6" stroke-linejoin="round"/>
<path d="M81.15,859.57 L85.66,857.61 L89.57,854.68 L94.46,852.33 L98.96,855.66 L103.27,853.89 L107.18,851.94 L111.49,854.87 L115.99,858.20 L120.88,857.61 L125.77,855.26 L129.69,854.87 L133.60,854.87 L137.91,855.66 L142.41,860.74 L146.71,860.74 L150.63,856.24 L155.13,856.83 L160.02,860.16 L163.93,854.68 L168.43,850.96 L173.13,857.81 L177.63,860.16 L182.52,858.20 L187.42,859.57 L191.33,858.79 L195.24,860.16 L199.16,859.18 L203.66,856.83 L207.96,858.20 L212.27,857.22 L216.38,856.24 L220.68,857.22 L225.19,857.61 L229.49,861.14 L234.38,860.16 L238.69,857.22 L243.19,858.79 L247.10,858.79 L252.00,854.87 L255.91,851.35 L260.22,855.26 L264.72,856.83 L269.02,855.85 L273.52,855.85 L277.44,853.31 L281.94,849.78 L286.24,853.31 L290.74,856.24 L295.44,857.61 L299.35,860.16 L303.86,855.26 L308.36,851.74 L312.66,855.66 L316.97,857.22 L321.47,856.24 L325.77,857.61 L330.27,857.61 L334.58,855.66 L339.08,858.79 L343.39,857.81 L347.50,857.61 L351.80,861.14 L356.11,859.18 L360.61,855.26 L364.91,853.70 L369.41,854.29 L373.72,859.18 L378.22,858.79 L382.72,854.87 L387.03,858.79 L391.53,862.11 L395.83,862.11 L399.75,860.74 L404.25,855.66 L408.55,856.83 L412.86,859.18 L417.36,857.22 L422.25,855.66 L426.56,858.79 L431.06,857.61 L435.56,855.26 L439.86,860.16 L444.17,856.83 L448.67,854.87 L452.58,856.24 L457.48,859.18 L461.78,860.74 L466.28,859.18 L470.00,853.70 L473.81,856.24 L478.70,860.16 L483.59,856.24 L488.09,855.26 L492.40,856.83 L496.70,859.18 L501.20,857.22 L506.10,858.20 L510.40,858.79 L514.90,859.18 L518.82,860.74 L522.73,861.14 L527.62,864.07 L531.54,862.70 L535.84,856.83 L540.34,855.26 L544.26,858.20 L548.76,859.57 L553.06,857.22 L557.95,857.22 L562.85,859.18 L567.74,858.79 L572.63,859.18 L577.52,859.57 L580.46,857.61 L584.37,857.61 L588.29,863.09 L592.20,862.11 L596.51,857.61 L601.99,859.57 L606.29,860.16 L610.79,860.74 L615.29,862.70 L619.60,861.14 L623.51,860.16 L627.82,857.22 L632.32,853.70 L636.82,856.83 L641.13,859.57 L646.02,862.70 L649.93,864.07 L654.43,864.66 L658.74,863.48 L663.04,860.16 L667.54,859.57 L671.46,858.79 L675.37,854.29 L680.26,856.83 L684.57,859.18 L689.07,857.61 L692.98,853.31 L697.49,855.26 L701.79,859.18 L706.10,859.18 L711.18,857.61 L715.49,856.24 L719.40,858.20 L723.71,860.16 L728.21,859.18 L732.71,858.20 L737.02,857.61 L740.93,857.61 L745.82,859.57 L750.32,856.24 L754.63,854.29 L758.93,856.83 L763.43,860.74 L767.35,860.16 L771.85,855.26 L776.15,856.83 L780.46,857.61 L784.96,853.70 L789.46,854.29 L793.77,861.14 L798.07,861.14 L802.57,855.26 L807.07,853.31 L811.38,855.26 L815.29,857.22 L820.19,859.57 L824.69,861.53 L828.99,861.53 L832.91,862.11 L837.80,862.70 L842.30,859.57 L846.60,862.11 L850.91,861.14 L855.41,856.83 L859.32,855.66 L865.00,856.24 L868.81,857.22 L872.72,854.87 L877.22,854.87 L881.53,858.79 L886.42,852.92 L890.33,854.29 L894.83,856.24 L899.14,854.29 L903.44,855.66 L907.95,857.22 L912.45,856.83 L916.75,854.87 L921.06,855.26 L925.56,856.24 L929.47,860.16 L933.97,860.16 L938.28,852.92 L942.58,850.37 L947.08,855.26 L951.59,854.87 L955.89,854.29 L960.20,855.26 L964.70,862.70 L968.61,860.16 L973.50,857.61 L977.42,854.87 L981.72,854.29 L986.22,858.79 L990.72,861.14 L995.03,856.24 L999.33,856.24 L1003.84,859.18 L1008.34,854.87 L1012.64,851.74 L1016.56,855.66 L1020.86,856.24 L1025.36,853.70 L1029.86,854.29 L1034.17,854.87 L1038.47,852.92 L1042.97,851.74 L1047.48,852.33 L1051.78,855.26 L1056.09,854.87 L1060.59,853.31 L1065.09,856.83 L1069.39,860.74 L1073.70,857.61 L1078.20,857.61 L1082.70,856.24 L1087.01,855.26 L1091.31,857.22 L1095.81,857.22 L1099.73,855.66 L1104.62,856.83 L1108.92,859.18 L1113.42,854.29 L1117.93,854.29 L1122.23,861.53 L1126.54,860.16 L1131.04,855.26 L1134.95,852.33 L1139.45,855.26 L1143.76,857.61 L1148.06,858.20 L1152.56,855.26 L1157.06,854.87 L1161.37,860.74 L1165.68,862.11 L1170.18,861.53 L1174.09,854.87 L1178.59,852.92 L1182.90,855.26 L1187.20,859.57 L1192.29,860.16 L1196.59,860.74 L1200.90,861.14 L1205.40,862.11 L1209.32,861.53 L1213.82,857.61 L1218.12,857.61 L1222.43,858.79 L1226.93,855.66 L1231.43,853.31 L1235.73,856.24 L1240.04,855.66 L1244.54,852.33 L1248.45,851.74 L1252.95,856.83 L1257.26,858.20 L1260.00,857.22 L1262.83,856.24 L1266.35,857.61 L1270.66,860.16 L1274.96,862.11 L1279.46,862.70 L1283.96,862.11 L1288.27,859.18 L1292.57,856.83 L1297.07,855.66 L1301.58,861.14 L1305.88,866.03 L1310.19,862.70 L1314.69,855.26 L1318.60,856.83 L1323.10,862.70 L1327.41,863.48 L1331.71,867.01 L1336.21,871.90 L1340.71,873.86 L1345.02,870.53 L1349.32,866.61 L1353.83,866.61 L1358.33,869.94 L1362.63,869.35 L1366.94,861.14 L1371.44,854.87 L1375.94,853.31 L1380.24,850.37 L1384.55,849.00 L1389.05,849.00 L1393.55,847.44 L1397.86,849.00 L1402.16,852.92 L1406.66,851.74 L1411.16,850.37 L1415.47,847.83 L1419.77,844.50 L1424.28,850.96 L1428.78,856.83 L1433.08,859.18 L1437.39,858.79 L1441.89,856.83 L1446.39,855.66 L1450.30,855.26 L1454.61,855.66 L1458.91,855.26 L1463.41,860.16 L1467.92,863.48 L1472.22,860.74 L1476.14,856.83 L1480.44,857.61 L1484.94,861.53 L1489.44,858.79 L1493.36,856.83 L1497.66,857.61 L1501.97,858.79 L1506.47,860.16 L1510.97,861.53 L1515.27,858.20 L1519.58,857.22 L1524.08,857.61 L1528.58,856.83 L1532.89,860.16 L1537.19,855.26 L1541.69,851.74 L1546.19,854.87 L1550.50,855.26 L1554.80,857.22 L1559.31,856.24 L1563.81,856.83 L1568.11,862.11 L1572.42,862.11 L1576.92,858.20 L1581.42,856.24 L1585.72,856.24 L1590.03,857.61 L1594.53,861.14 L1599.03,860.16 L1603.34,858.79 L1607.25,858.20 L1611.56,858.79 L1616.06,861.53 L1620.56,862.11 L1624.86,860.16 L1629.17,858.79 L1633.67,861.53 L1638.17,857.61 L1642.48,856.83 L1646.78,858.79 L1651.28,862.70" fill="none" stroke="#c6e0f6" stroke-width="1.6" stroke-linejoin="round"/>
<text x="779.3" y="585.0" font-size="23" fill="#ccccdc" font-weight="normal" stroke="#ccccdc" stroke-width="0.6" textLength="160.2" lengthAdjust="spacingAndGlyphs" >server requests</text>
<line x1="57.3" y1="974.6" x2="72.3" y2="974.6" stroke="#c6e0f6" stroke-width="6.6" stroke-linecap="round"/>
<text x="96.2" y="979.2" font-size="19.5" fill="#ccccdc" font-weight="normal" stroke="#ccccdc" stroke-width="0.3" textLength="132.4" lengthAdjust="spacingAndGlyphs" >web_server_01</text>
<line x1="254.3" y1="974.6" x2="269.3" y2="974.6" stroke="#5fa2dd" stroke-width="6.6" stroke-linecap="round"/>
<text x="291.7" y="979.2" font-size="19.5" fill="#ccccdc" font-weight="normal" stroke="#ccccdc" stroke-width="0.3" textLength="132.4" lengthAdjust="spacingAndGlyphs" >web_server_02</text>
<line x1="452.3" y1="974.6" x2="467.3" y2="974.6" stroke="#2e82cf" stroke-width="6.6" stroke-linecap="round"/>
<text x="490.4" y="979.2" font-size="19.5" fill="#ccccdc" font-weight="normal" stroke="#ccccdc" stroke-width="0.3" textLength="132.4" lengthAdjust="spacingAndGlyphs" >web_server_03</text>
<line x1="651.3" y1="974.6" x2="666.3" y2="974.6" stroke="#1a5189" stroke-width="6.6" stroke-linecap="round"/>
<text x="690.1" y="979.2" font-size="19.5" fill="#ccccdc" font-weight="normal" stroke="#ccccdc" stroke-width="0.3" textLength="132.4" lengthAdjust="spacingAndGlyphs" >web_server_04</text>
<text x="1720.1" y="585.0" font-size="23" fill="#ccccdc" font-weight="normal" stroke="#ccccdc" stroke-width="0.6" textLength="118.3" lengthAdjust="spacingAndGlyphs" >Google hits</text>
<rect x="1720.8" y="656.8" width="147.2" height="298" rx="2" fill="#222327"/>
<rect x="1720.8" y="952.4" width="147.2" height="2.4" rx="1.5" fill="#2d4a6e"/>
<rect x="1720.8" y="951.8" width="147.2" height="2.8" rx="1.2" fill="#5794f2"/>
<text x="1741.8" y="646.4" font-size="39" fill="#5794f2" font-weight="normal" stroke="#5794f2" stroke-width="0.35" textLength="104.3" lengthAdjust="spacingAndGlyphs" >0.400</text>
<rect x="1883.7" y="656.8" width="148.2" height="298" rx="2" fill="#222327"/>
<rect x="1883.7" y="871.5" width="148.2" height="83.3" rx="1.5" fill="#2d4a6e"/>
<rect x="1883.7" y="870.9" width="148.2" height="2.8" rx="1.2" fill="#5794f2"/>
<text x="1922.2" y="646.4" font-size="39" fill="#5794f2" font-weight="normal" stroke="#5794f2" stroke-width="0.35" textLength="70.5" lengthAdjust="spacingAndGlyphs" >27.7</text>
<rect x="2047.0" y="656.8" width="147.8" height="298" rx="2" fill="#222327"/>
<rect x="2047.0" y="842.9" width="147.8" height="111.9" rx="1.5" fill="#2d4a6e"/>
<rect x="2047.0" y="842.3" width="147.8" height="2.8" rx="1.2" fill="#5794f2"/>
<text x="2088.4" y="646.4" font-size="39" fill="#5794f2" font-weight="normal" stroke="#5794f2" stroke-width="0.35" textLength="64.5" lengthAdjust="spacingAndGlyphs" >37.1</text>
<rect x="2209.9" y="656.8" width="149.1" height="298" rx="2" fill="#222327"/>
<rect x="2209.9" y="752.6" width="149.1" height="202.2" rx="1.5" fill="#4e3a60"/>
<rect x="2209.9" y="752.0" width="149.1" height="2.8" rx="1.2" fill="#b877d9"/>
<text x="2244.6" y="646.4" font-size="39" fill="#b877d9" font-weight="normal" stroke="#b877d9" stroke-width="0.35" textLength="77.9" lengthAdjust="spacingAndGlyphs" >66.5</text>
<rect x="2374.0" y="656.8" width="148.0" height="298" rx="2" fill="#222327"/>
<rect x="2374.0" y="891.6" width="148.0" height="63.2" rx="1.5" fill="#2d4a6e"/>
<rect x="2374.0" y="891.0" width="148.0" height="2.8" rx="1.2" fill="#5794f2"/>
<text x="2411.6" y="646.4" font-size="39" fill="#5794f2" font-weight="normal" stroke="#5794f2" stroke-width="0.35" textLength="70.5" lengthAdjust="spacingAndGlyphs" >21.2</text>
<text x="1750.9" y="979.8" font-size="22" fill="#ccccdc" font-weight="normal" stroke="#ccccdc" stroke-width="0.3" textLength="86.9" lengthAdjust="spacingAndGlyphs" >A-series</text>
<text x="1914.3" y="979.8" font-size="22" fill="#ccccdc" font-weight="normal" stroke="#ccccdc" stroke-width="0.3" textLength="86.9" lengthAdjust="spacingAndGlyphs" >B-series</text>
<text x="2077.4" y="979.8" font-size="22" fill="#ccccdc" font-weight="normal" stroke="#ccccdc" stroke-width="0.3" textLength="86.9" lengthAdjust="spacingAndGlyphs" >C-series</text>
<text x="2241.0" y="979.8" font-size="22" fill="#ccccdc" font-weight="normal" stroke="#ccccdc" stroke-width="0.3" textLength="86.9" lengthAdjust="spacingAndGlyphs" >D-series</text>
<text x="2404.5" y="979.8" font-size="22" fill="#ccccdc" font-weight="normal" stroke="#ccccdc" stroke-width="0.3" textLength="86.9" lengthAdjust="spacingAndGlyphs" >E-series</text>
<text x="1156.3" y="1048.5" font-size="23" fill="#ccccdc" font-weight="normal" stroke="#ccccdc" stroke-width="0.6" textLength="246.9" lengthAdjust="spacingAndGlyphs" >client side full page load</text>
<line x1="89.5" y1="1357.8" x2="2259.9" y2="1357.8" stroke="#3c3e43" stroke-width="1.6"/>
<text x="80.5" y="1364.4" font-size="18.5" fill="#ccccdc" text-anchor="end" font-weight="normal" stroke="#ccccdc" stroke-width="0.3" >0 ms</text>
<line x1="89.5" y1="1304.8" x2="2259.9" y2="1304.8" stroke="#3c3e43" stroke-width="1.6"/>
<text x="80.5" y="1311.4" font-size="18.5" fill="#ccccdc" text-anchor="end" font-weight="normal" stroke="#ccccdc" stroke-width="0.3" >1 s</text>
<line x1="89.5" y1="1251.8" x2="2259.9" y2="1251.8" stroke="#3c3e43" stroke-width="1.6"/>
<text x="80.5" y="1258.4" font-size="18.5" fill="#ccccdc" text-anchor="end" font-weight="normal" stroke="#ccccdc" stroke-width="0.3" >2 s</text>
<line x1="89.5" y1="1198.8" x2="2259.9" y2="1198.8" stroke="#3c3e43" stroke-width="1.6"/>
<text x="80.5" y="1205.4" font-size="18.5" fill="#ccccdc" text-anchor="end" font-weight="normal" stroke="#ccccdc" stroke-width="0.3" >3 s</text>
<line x1="89.5" y1="1145.8" x2="2259.9" y2="1145.8" stroke="#3c3e43" stroke-width="1.6"/>
<text x="80.5" y="1152.4" font-size="18.5" fill="#ccccdc" text-anchor="end" font-weight="normal" stroke="#ccccdc" stroke-width="0.3" >4 s</text>
<line x1="89.5" y1="1092.8" x2="2259.9" y2="1092.8" stroke="#3c3e43" stroke-width="1.6"/>
<text x="80.5" y="1099.4" font-size="18.5" fill="#ccccdc" text-anchor="end" font-weight="normal" stroke="#ccccdc" stroke-width="0.3" >5 s</text>
<line x1="97.9" y1="1092.8" x2="97.9" y2="1359.8" stroke="#3c3e43" stroke-width="1.6"/>
<text x="97.9" y="1387.0" font-size="18.5" fill="#ccccdc" text-anchor="middle" font-weight="normal" stroke="#ccccdc" stroke-width="0.3" >16:50</text>
<line x1="278.6" y1="1092.8" x2="278.6" y2="1359.8" stroke="#3c3e43" stroke-width="1.6"/>
<text x="278.6" y="1387.0" font-size="18.5" fill="#ccccdc" text-anchor="middle" font-weight="normal" stroke="#ccccdc" stroke-width="0.3" >16:55</text>
<line x1="459.2" y1="1092.8" x2="459.2" y2="1359.8" stroke="#3c3e43" stroke-width="1.6"/>
<text x="459.2" y="1387.0" font-size="18.5" fill="#ccccdc" text-anchor="middle" font-weight="normal" stroke="#ccccdc" stroke-width="0.3" >17:00</text>
<line x1="639.9" y1="1092.8" x2="639.9" y2="1359.8" stroke="#3c3e43" stroke-width="1.6"/>
<text x="639.9" y="1387.0" font-size="18.5" fill="#ccccdc" text-anchor="middle" font-weight="normal" stroke="#ccccdc" stroke-width="0.3" >17:05</text>
<line x1="820.6" y1="1092.8" x2="820.6" y2="1359.8" stroke="#3c3e43" stroke-width="1.6"/>
<text x="820.6" y="1387.0" font-size="18.5" fill="#ccccdc" text-anchor="middle" font-weight="normal" stroke="#ccccdc" stroke-width="0.3" >17:10</text>
<line x1="1001.2" y1="1092.8" x2="1001.2" y2="1359.8" stroke="#3c3e43" stroke-width="1.6"/>
<text x="1001.2" y="1387.0" font-size="18.5" fill="#ccccdc" text-anchor="middle" font-weight="normal" stroke="#ccccdc" stroke-width="0.3" >17:15</text>
<line x1="1181.9" y1="1092.8" x2="1181.9" y2="1359.8" stroke="#3c3e43" stroke-width="1.6"/>
<text x="1181.9" y="1387.0" font-size="18.5" fill="#ccccdc" text-anchor="middle" font-weight="normal" stroke="#ccccdc" stroke-width="0.3" >17:20</text>
<line x1="1362.6" y1="1092.8" x2="1362.6" y2="1359.8" stroke="#3c3e43" stroke-width="1.6"/>
<text x="1362.6" y="1387.0" font-size="18.5" fill="#ccccdc" text-anchor="middle" font-weight="normal" stroke="#ccccdc" stroke-width="0.3" >17:25</text>
<line x1="1543.3" y1="1092.8" x2="1543.3" y2="1359.8" stroke="#3c3e43" stroke-width="1.6"/>
<text x="1543.3" y="1387.0" font-size="18.5" fill="#ccccdc" text-anchor="middle" font-weight="normal" stroke="#ccccdc" stroke-width="0.3" >17:30</text>
<line x1="1723.9" y1="1092.8" x2="1723.9" y2="1359.8" stroke="#3c3e43" stroke-width="1.6"/>
<text x="1723.9" y="1387.0" font-size="18.5" fill="#ccccdc" text-anchor="middle" font-weight="normal" stroke="#ccccdc" stroke-width="0.3" >17:35</text>
<line x1="1904.6" y1="1092.8" x2="1904.6" y2="1359.8" stroke="#3c3e43" stroke-width="1.6"/>
<text x="1904.6" y="1387.0" font-size="18.5" fill="#ccccdc" text-anchor="middle" font-weight="normal" stroke="#ccccdc" stroke-width="0.3" >17:40</text>
<line x1="2085.3" y1="1092.8" x2="2085.3" y2="1359.8" stroke="#3c3e43" stroke-width="1.6"/>
<text x="2085.3" y="1387.0" font-size="18.5" fill="#ccccdc" text-anchor="middle" font-weight="normal" stroke="#ccccdc" stroke-width="0.3" >17:45</text>
<rect x="90.4" y="1179.7" width="31.8" height="89.8" fill="#e24d42"/>
<rect x="90.4" y="1269.5" width="31.8" height="55.0" fill="#ef843c"/>
<rect x="90.4" y="1324.5" width="31.8" height="27.8" fill="#e8b93a"/>
<rect x="90.4" y="1352.3" width="31.8" height="5.5" fill="#f2c96d"/>
<rect x="170.8" y="1245.2" width="95.8" height="49.1" fill="#e24d42"/>
<rect x="170.8" y="1294.3" width="95.8" height="39.7" fill="#ef843c"/>
<rect x="170.8" y="1334.0" width="95.8" height="21.8" fill="#e8b93a"/>
<rect x="170.8" y="1355.8" width="95.8" height="2.0" fill="#f2c96d"/>
<rect x="315.7" y="1191.0" width="95.7" height="78.5" fill="#e24d42"/>
<rect x="315.7" y="1269.5" width="95.7" height="53.0" fill="#ef843c"/>
<rect x="315.7" y="1322.5" width="95.7" height="29.3" fill="#e8b93a"/>
<rect x="315.7" y="1351.8" width="95.7" height="6.0" fill="#f2c96d"/>
<rect x="460.0" y="1193.6" width="95.8" height="77.4" fill="#e24d42"/>
<rect x="460.0" y="1271.0" width="95.8" height="53.0" fill="#ef843c"/>
<rect x="460.0" y="1324.0" width="95.8" height="28.3" fill="#e8b93a"/>
<rect x="460.0" y="1352.3" width="95.8" height="5.5" fill="#f2c96d"/>
<rect x="604.4" y="1208.0" width="95.8" height="69.9" fill="#e24d42"/>
<rect x="604.4" y="1277.9" width="95.8" height="49.6" fill="#ef843c"/>
<rect x="604.4" y="1327.5" width="95.8" height="24.8" fill="#e8b93a"/>
<rect x="604.4" y="1352.3" width="95.8" height="5.5" fill="#f2c96d"/>
<rect x="748.8" y="1212.4" width="96.2" height="61.6" fill="#e24d42"/>
<rect x="748.8" y="1274.0" width="96.2" height="50.5" fill="#ef843c"/>
<rect x="748.8" y="1324.5" width="96.2" height="26.8" fill="#e8b93a"/>
<rect x="748.8" y="1351.3" width="96.2" height="6.5" fill="#f2c96d"/>
<rect x="893.6" y="1211.9" width="95.8" height="71.0" fill="#e24d42"/>
<rect x="893.6" y="1282.9" width="95.8" height="43.6" fill="#ef843c"/>
<rect x="893.6" y="1326.5" width="95.8" height="23.8" fill="#e8b93a"/>
<rect x="893.6" y="1350.3" width="95.8" height="7.5" fill="#f2c96d"/>
<rect x="1038.0" y="1192.0" width="95.8" height="73.0" fill="#e24d42"/>
<rect x="1038.0" y="1265.0" width="95.8" height="56.0" fill="#ef843c"/>
<rect x="1038.0" y="1321.0" width="95.8" height="28.3" fill="#e8b93a"/>
<rect x="1038.0" y="1349.3" width="95.8" height="8.5" fill="#f2c96d"/>
<rect x="1182.9" y="1147.4" width="95.7" height="98.2" fill="#e24d42"/>
<rect x="1182.9" y="1245.6" width="95.7" height="71.0" fill="#ef843c"/>
<rect x="1182.9" y="1316.6" width="95.7" height="31.2" fill="#e8b93a"/>
<rect x="1182.9" y="1347.8" width="95.7" height="10.0" fill="#f2c96d"/>
<rect x="1327.2" y="1204.0" width="95.8" height="67.4" fill="#e24d42"/>
<rect x="1327.2" y="1271.4" width="95.8" height="48.6" fill="#ef843c"/>
<rect x="1327.2" y="1320.0" width="95.8" height="28.8" fill="#e8b93a"/>
<rect x="1327.2" y="1348.8" width="95.8" height="9.0" fill="#f2c96d"/>
<rect x="1471.6" y="1147.4" width="96.2" height="93.3" fill="#e24d42"/>
<rect x="1471.6" y="1240.7" width="96.2" height="69.3" fill="#ef843c"/>
<rect x="1471.6" y="1310.0" width="96.2" height="33.4" fill="#e8b93a"/>
<rect x="1471.6" y="1343.4" width="96.2" height="14.4" fill="#f2c96d"/>
<rect x="1616.0" y="1189.6" width="96.2" height="77.9" fill="#e24d42"/>
<rect x="1616.0" y="1267.5" width="96.2" height="58.5" fill="#ef843c"/>
<rect x="1616.0" y="1326.0" width="96.2" height="24.3" fill="#e8b93a"/>
<rect x="1616.0" y="1350.3" width="96.2" height="7.5" fill="#f2c96d"/>
<rect x="1760.3" y="1154.4" width="96.3" height="99.6" fill="#e24d42"/>
<rect x="1760.3" y="1254.0" width="96.3" height="63.6" fill="#ef843c"/>
<rect x="1760.3" y="1317.6" width="96.3" height="28.8" fill="#e8b93a"/>
<rect x="1760.3" y="1346.4" width="96.3" height="11.4" fill="#f2c96d"/>
<rect x="1905.2" y="1182.6" width="96.2" height="71.4" fill="#e24d42"/>
<rect x="1905.2" y="1254.0" width="96.2" height="57.6" fill="#ef843c"/>
<rect x="1905.2" y="1311.6" width="96.2" height="33.8" fill="#e8b93a"/>
<rect x="1905.2" y="1345.4" width="96.2" height="12.4" fill="#f2c96d"/>
<rect x="2049.5" y="1150.9" width="96.3" height="91.8" fill="#e24d42"/>
<rect x="2049.5" y="1242.7" width="96.3" height="62.5" fill="#ef843c"/>
<rect x="2049.5" y="1305.2" width="96.3" height="39.2" fill="#e8b93a"/>
<rect x="2049.5" y="1344.4" width="96.3" height="13.4" fill="#f2c96d"/>
<rect x="2194.4" y="1208.0" width="65.0" height="71.4" fill="#e24d42"/>
<rect x="2194.4" y="1279.4" width="65.0" height="53.1" fill="#ef843c"/>
<rect x="2194.4" y="1332.5" width="65.0" height="22.8" fill="#e8b93a"/>
<rect x="2194.4" y="1355.3" width="65.0" height="2.5" fill="#f2c96d"/>
<text x="2467.0" y="1106.4" font-size="19.5" fill="#33a2e5" font-weight="normal" stroke="#33a2e5" stroke-width="0.3" textLength="32.1" lengthAdjust="spacingAndGlyphs" >avg</text>
<line x1="2298.9" y1="1137.9" x2="2313.7" y2="1137.9" stroke="#fbe3d4" stroke-width="6.6" stroke-linecap="round"/>
<text x="2332.3" y="1142.8" font-size="19.5" fill="#ccccdc" font-weight="normal" stroke="#ccccdc" stroke-width="0.3" textLength="82.2" lengthAdjust="spacingAndGlyphs" >upper_25</text>
<text x="2443.7" y="1142.8" font-size="19.5" fill="#ccccdc" font-weight="normal" stroke="#ccccdc" stroke-width="0.3" textLength="67.7" lengthAdjust="spacingAndGlyphs" >6.81 ms</text>
<rect x="2292.8" y="1158.4" width="220.8" height="40.6" fill="#222328"/>
<line x1="2298.9" y1="1179.0" x2="2313.7" y2="1179.0" stroke="#f2c96d" stroke-width="6.6" stroke-linecap="round"/>
<text x="2332.3" y="1183.9" font-size="19.5" fill="#ccccdc" font-weight="normal" stroke="#ccccdc" stroke-width="0.3" textLength="82.2" lengthAdjust="spacingAndGlyphs" >upper_50</text>
<text x="2447.8" y="1183.9" font-size="19.5" fill="#ccccdc" font-weight="normal" stroke="#ccccdc" stroke-width="0.3" textLength="63.6" lengthAdjust="spacingAndGlyphs" >142 ms</text>
<line x1="2298.9" y1="1220.1" x2="2313.7" y2="1220.1" stroke="#eab839" stroke-width="6.6" stroke-linecap="round"/>
<text x="2332.3" y="1225.0" font-size="19.5" fill="#ccccdc" font-weight="normal" stroke="#ccccdc" stroke-width="0.3" textLength="82.2" lengthAdjust="spacingAndGlyphs" >upper_75</text>
<text x="2445.3" y="1225.0" font-size="19.5" fill="#ccccdc" font-weight="normal" stroke="#ccccdc" stroke-width="0.3" textLength="66.1" lengthAdjust="spacingAndGlyphs" >535 ms</text>
<rect x="2292.8" y="1240.6" width="220.8" height="40.6" fill="#222328"/>
<line x1="2298.9" y1="1261.2" x2="2313.7" y2="1261.2" stroke="#ef843c" stroke-width="6.6" stroke-linecap="round"/>
<text x="2332.3" y="1266.1" font-size="19.5" fill="#ccccdc" font-weight="normal" stroke="#ccccdc" stroke-width="0.3" textLength="82.2" lengthAdjust="spacingAndGlyphs" >upper_90</text>
<text x="2459.3" y="1266.1" font-size="19.5" fill="#ccccdc" font-weight="normal" stroke="#ccccdc" stroke-width="0.3" textLength="52.1" lengthAdjust="spacingAndGlyphs" >1.04 s</text>
<line x1="2298.9" y1="1302.3" x2="2313.7" y2="1302.3" stroke="#e24d42" stroke-width="6.6" stroke-linecap="round"/>
<text x="2332.3" y="1307.2" font-size="19.5" fill="#ccccdc" font-weight="normal" stroke="#ccccdc" stroke-width="0.3" textLength="82.2" lengthAdjust="spacingAndGlyphs" >upper_95</text>
<text x="2459.3" y="1307.2" font-size="19.5" fill="#ccccdc" font-weight="normal" stroke="#ccccdc" stroke-width="0.3" textLength="52.1" lengthAdjust="spacingAndGlyphs" >1.46 s</text>
</svg></body></html>
